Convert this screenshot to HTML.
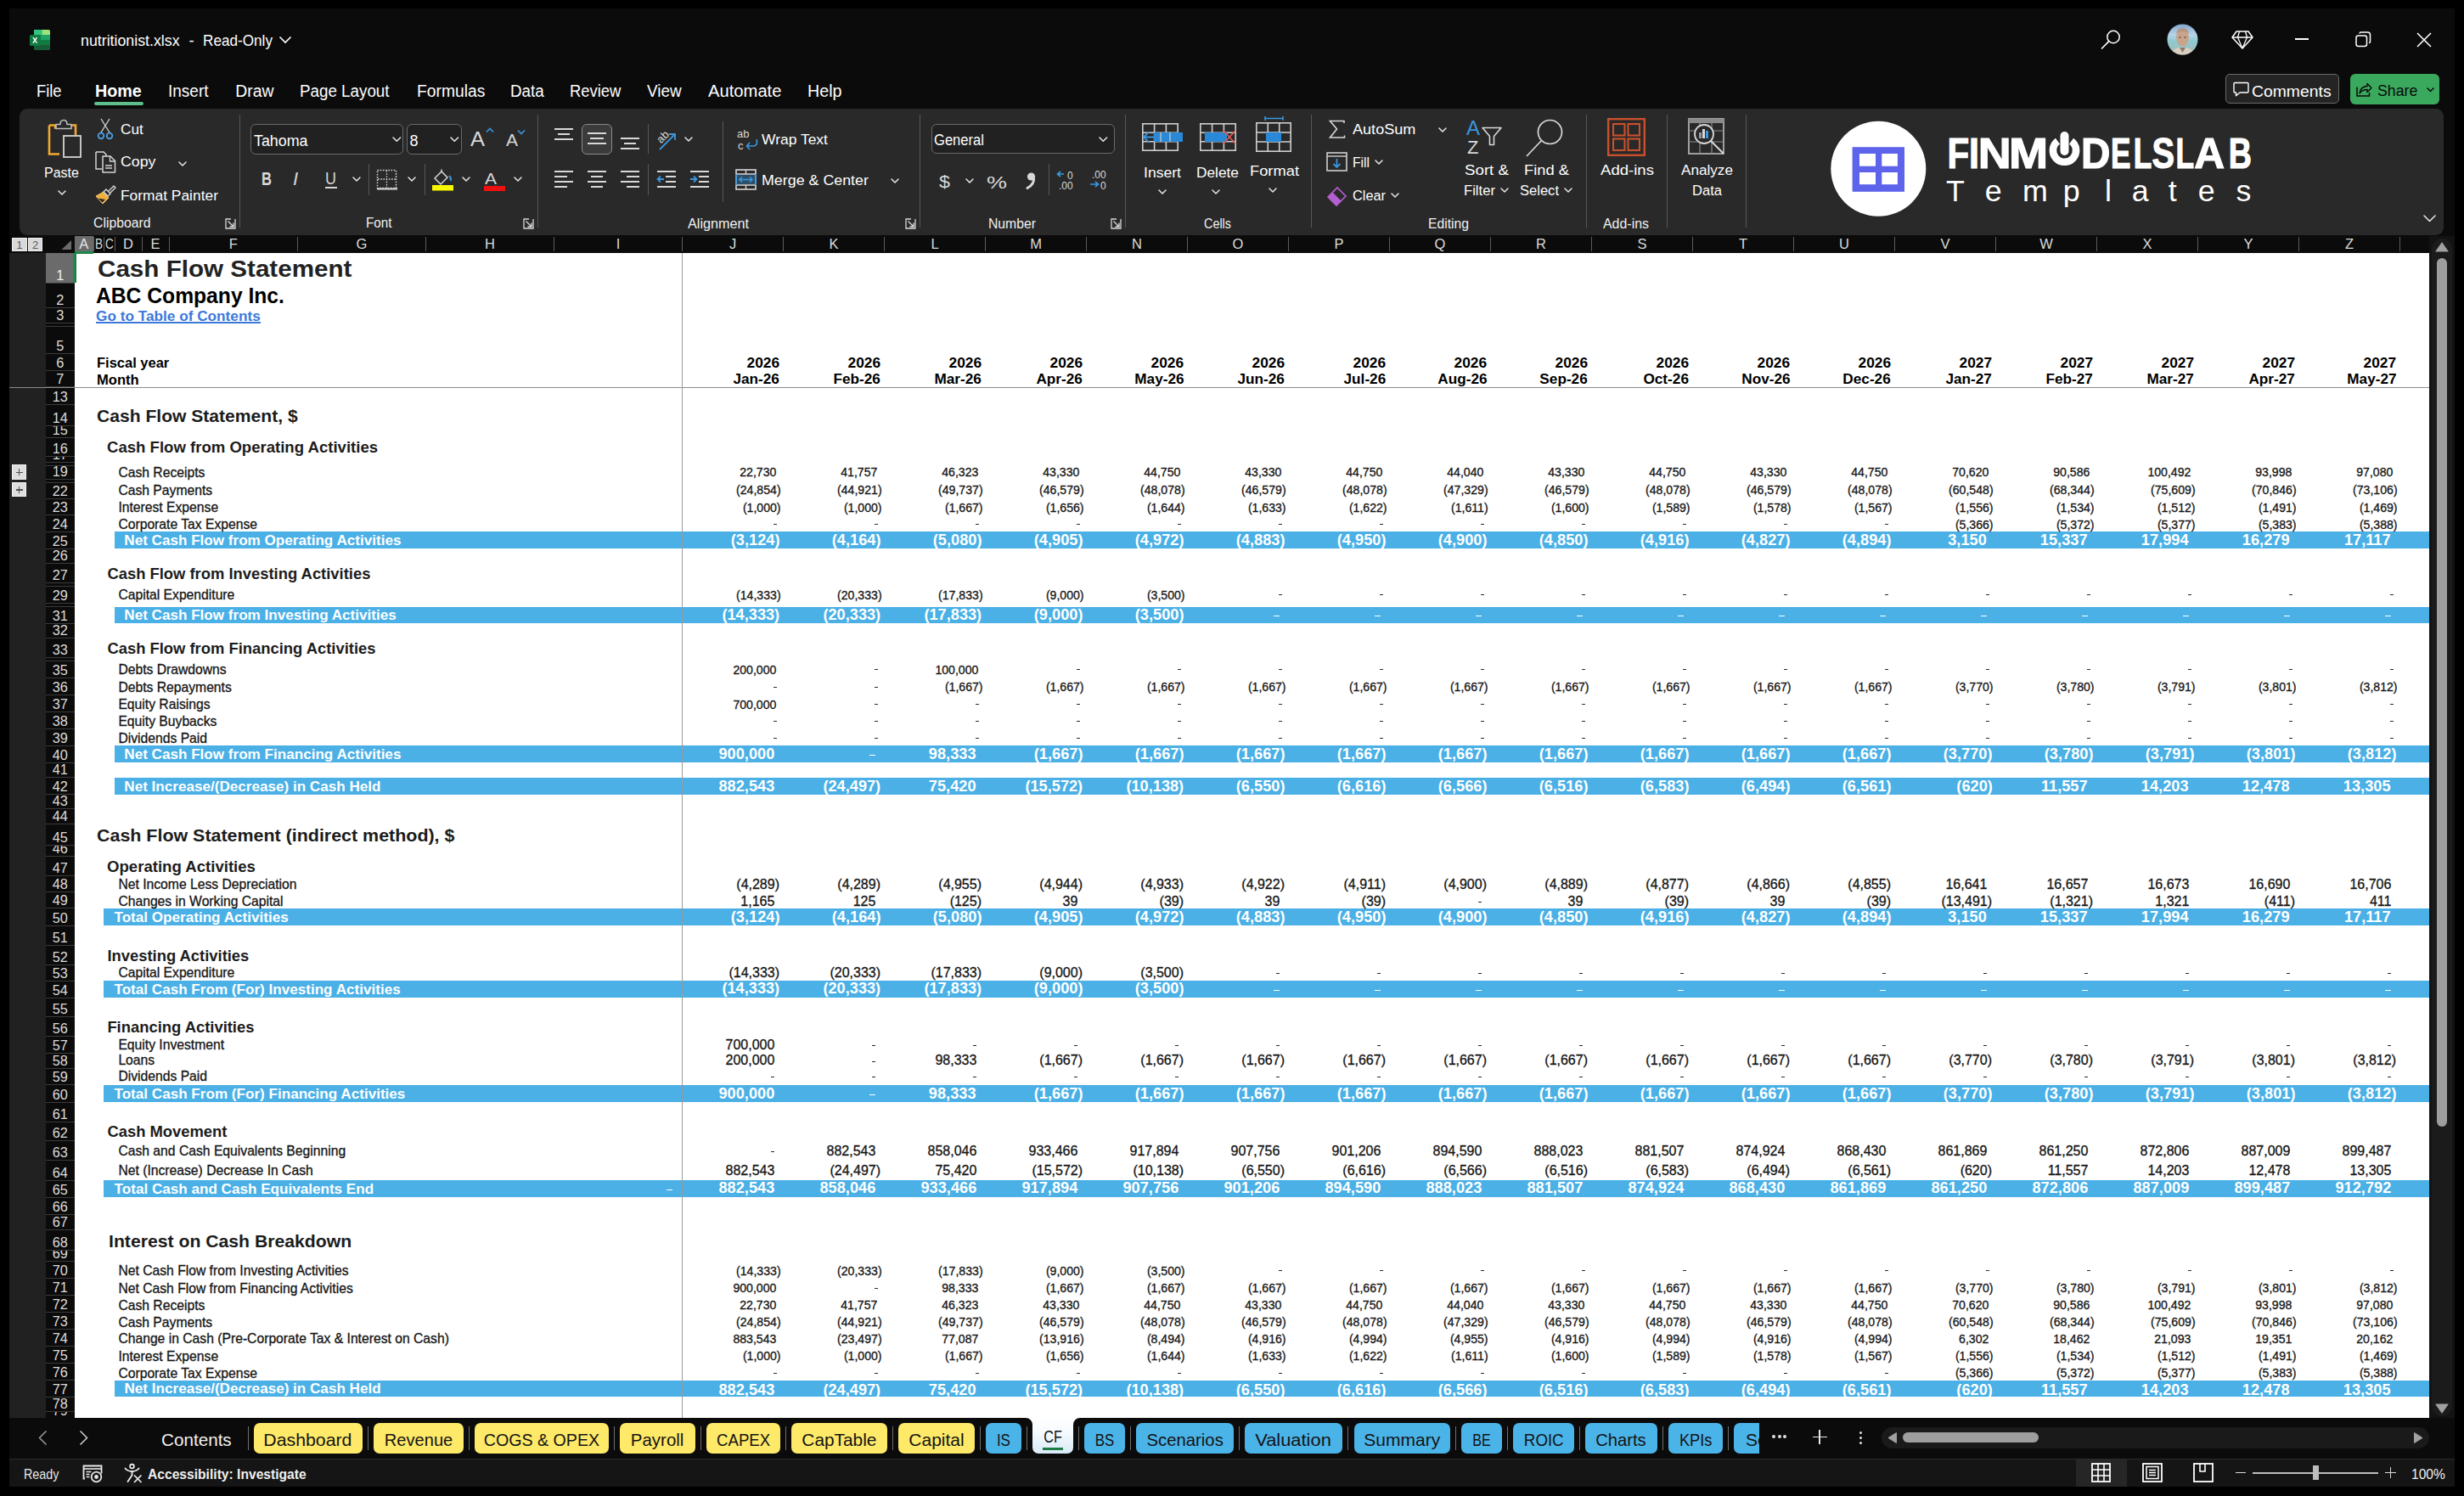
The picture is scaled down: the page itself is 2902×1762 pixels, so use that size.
<!DOCTYPE html>
<html><head><meta charset="utf-8"><title>nutritionist.xlsx</title>
<style>
html,body{margin:0;padding:0;}
body{width:2902px;height:1762px;background:#000;position:relative;overflow:hidden;font-family:"Liberation Sans",sans-serif;}
.a{position:absolute;}
.t,.s{position:absolute;white-space:nowrap;line-height:1;}
.s{-webkit-text-stroke:0.3px #141414;}
svg.a{overflow:visible;}
</style></head><body>
<div class="a" style="left:11.00px;top:10.00px;width:2880.00px;height:1741.00px;background:#0b0b0b;"></div>
<svg class="a" style="left:34.00px;top:34.00px" width="26" height="26" viewBox="0 0 26 26">
<rect x="6" y="1" width="19" height="24" rx="2" fill="#107c41"/>
<rect x="6" y="1" width="9.5" height="6" fill="#33c481"/>
<path d="M15.5 1h7.5a2 2 0 0 1 2 2v4h-9.5z" fill="#9ee37a"/>
<rect x="6" y="7" width="19" height="6" fill="#21a366"/>
<rect x="6" y="13" width="19" height="6" fill="#107c41"/>
<path d="M6 19h19v4a2 2 0 0 1-2 2H8a2 2 0 0 1-2-2z" fill="#185c37"/>
<rect x="1" y="7" width="13" height="13" rx="1.5" fill="#107c41"/>
<path d="M4.2 10l2.1 3.3L4.1 16.8h1.7l1.4-2.3 1.4 2.3h1.7l-2.2-3.4 2.1-3.4H8.5L7.2 12.2 5.9 10z" fill="#fff"/>
</svg>
<div class="t" style="top:38.59px;font-size:18.60px;color:#ffffff;left:95.30px;transform:scaleX(0.9560);transform-origin:0 0;">nutritionist.xlsx</div>
<div class="t" style="top:38.59px;font-size:18.60px;color:#ffffff;left:222.40px;">-</div>
<div class="t" style="top:38.59px;font-size:18.60px;color:#ffffff;left:239.40px;transform:scaleX(0.9223);transform-origin:0 0;">Read-Only</div>
<svg class="a" style="left:328.00px;top:42.00px" width="16" height="10" viewBox="0 0 16 10"><path d="M1.5 1.5l6.5 6.5 6.5-6.5" stroke="#fff" stroke-width="1.6" fill="none"/></svg>
<svg class="a" style="left:2472.00px;top:34.00px" width="28" height="26" viewBox="0 0 28 26"><circle cx="17" cy="9.5" r="7.2" stroke="#fff" stroke-width="1.5" fill="none"/><path d="M11.8 14.7L3.5 23" stroke="#fff" stroke-width="1.7" stroke-linecap="round"/></svg>
<svg class="a" style="left:2552.00px;top:28.00px" width="37" height="37" viewBox="0 0 37 37">
<defs><clipPath id="avc"><circle cx="18.5" cy="18.5" r="18"/></clipPath>
<linearGradient id="avbg" x1="0" y1="0" x2="0" y2="1"><stop offset="0" stop-color="#7fa6cf"/><stop offset="0.35" stop-color="#b9d3e6"/><stop offset="0.55" stop-color="#8ec9cf"/><stop offset="1" stop-color="#a9b8b8"/></linearGradient></defs>
<g clip-path="url(#avc)">
<rect width="37" height="37" fill="url(#avbg)"/>
<ellipse cx="18.5" cy="16.5" rx="7.5" ry="10" fill="#c8a48c"/>
<path d="M11 12q1-7 7.5-7t7.5 7q-2-3-7.5-3t-7.5 3z" fill="#b89580"/>
<path d="M4 37q2-9 14.5-9.5q12.5 0.5 14.5 9.5z" fill="#d9cfc0"/>
<path d="M15 28l3.5 6 3.5-6" fill="#8a7a6a"/>
<ellipse cx="15.5" cy="16" rx="1.2" ry="0.8" fill="#4a3a30"/><ellipse cx="21.5" cy="16" rx="1.2" ry="0.8" fill="#4a3a30"/>
</g></svg>
<svg class="a" style="left:2628.00px;top:35.00px" width="26" height="24" viewBox="0 0 26 24"><path d="M6 2h14l5 7-12 13L1 9z" stroke="#fff" stroke-width="1.5" fill="none" stroke-linejoin="round"/><path d="M1 9h24M9.5 2L7.5 9l5.5 13M16.5 2l2 7-5.5 13" stroke="#fff" stroke-width="1.3" fill="none"/></svg>
<div class="a" style="left:2703.00px;top:45.20px;width:16.00px;height:2.00px;background:#ffffff;"></div>
<svg class="a" style="left:2774.00px;top:37.00px" width="19" height="19" viewBox="0 0 19 19"><rect x="1" y="5" width="12.5" height="12.5" rx="2.5" stroke="#fff" stroke-width="1.5" fill="none"/><path d="M5 2.5q0-1.5 1.5-1.5h8q3 0 3 3v8q0 1.5-1.5 1.5" stroke="#fff" stroke-width="1.5" fill="none"/></svg>
<svg class="a" style="left:2846.00px;top:38.00px" width="18" height="18" viewBox="0 0 18 18"><path d="M1 1L17 17M17 1L1 17" stroke="#fff" stroke-width="1.6"/></svg>
<div class="a" style="left:2621.00px;top:87.00px;width:134.00px;height:35.00px;background:#242424;border:1px solid #6a6a6a;border-radius:5px;box-sizing:border-box;"></div>
<svg class="a" style="left:2630.00px;top:96.00px" width="19" height="18" viewBox="0 0 19 18"><path d="M2 1.5h15a1 1 0 0 1 1 1v9.5a1 1 0 0 1-1 1H8l-4.5 3.7V13H2a1 1 0 0 1-1-1V2.5a1 1 0 0 1 1-1z" stroke="#fff" stroke-width="1.4" fill="none" stroke-linejoin="round"/></svg>
<div class="t" style="top:98.59px;font-size:18.60px;color:#ffffff;left:2652.30px;transform:scaleX(1.0409);transform-origin:0 0;">Comments</div>
<div class="a" style="left:2768.00px;top:87.00px;width:105.00px;height:35.50px;background:#3aa95e;border-radius:6px;"></div>
<svg class="a" style="left:2773.00px;top:95.00px" width="21" height="20" viewBox="0 0 21 20"><path d="M3 7.5v10.5h14.5v-4" stroke="#0a0a0a" stroke-width="1.5" fill="none"/><path d="M6 15q1-8 9-8.5V3.5l5 5-5 5v-3q-6 0-9 4.5z" stroke="#0a0a0a" stroke-width="1.4" fill="none" stroke-linejoin="round"/></svg>
<div class="t" style="top:97.79px;font-size:18.60px;color:#0a0a0a;left:2799.60px;transform:scaleX(0.9550);transform-origin:0 0;">Share</div>
<svg class="a" style="left:2857.00px;top:102.00px" width="11" height="8" viewBox="0 0 11 8"><path d="M1.5 1.5l4 4 4-4" stroke="#0a0a0a" stroke-width="1.5" fill="none"/></svg>
<div class="t" style="top:97.51px;font-size:19.40px;color:#ffffff;left:42.60px;transform:scaleX(0.9469);transform-origin:0 0;">File</div>
<div class="t" style="top:97.51px;font-size:19.40px;color:#ffffff;font-weight:bold;left:111.60px;transform:scaleX(1.0167);transform-origin:0 0;">Home</div>
<div class="t" style="top:97.51px;font-size:19.40px;color:#ffffff;left:198.00px;transform:scaleX(0.9790);transform-origin:0 0;">Insert</div>
<div class="t" style="top:97.51px;font-size:19.40px;color:#ffffff;left:277.20px;">Draw</div>
<div class="t" style="top:97.51px;font-size:19.40px;color:#ffffff;left:353.00px;transform:scaleX(0.9693);transform-origin:0 0;">Page Layout</div>
<div class="t" style="top:97.51px;font-size:19.40px;color:#ffffff;left:491.00px;transform:scaleX(0.9944);transform-origin:0 0;">Formulas</div>
<div class="t" style="top:97.51px;font-size:19.40px;color:#ffffff;left:600.60px;transform:scaleX(0.9712);transform-origin:0 0;">Data</div>
<div class="t" style="top:97.51px;font-size:19.40px;color:#ffffff;left:670.90px;transform:scaleX(0.9495);transform-origin:0 0;">Review</div>
<div class="t" style="top:97.51px;font-size:19.40px;color:#ffffff;left:762.20px;transform:scaleX(0.9736);transform-origin:0 0;">View</div>
<div class="t" style="top:97.51px;font-size:19.40px;color:#ffffff;left:834.00px;transform:scaleX(1.0417);transform-origin:0 0;">Automate</div>
<div class="t" style="top:97.51px;font-size:19.40px;color:#ffffff;left:951.00px;transform:scaleX(1.0151);transform-origin:0 0;">Help</div>
<div class="a" style="left:111.00px;top:120.00px;width:58.00px;height:3.50px;background:#5fbf8a;border-radius:2px;"></div>
<div class="a" style="left:23.00px;top:128.00px;width:2855.00px;height:148.50px;background:#292929;border-radius:9px;"></div>
<svg class="a" style="left:53.00px;top:139.00px" width="45" height="48" viewBox="0 0 45 48">
<path d="M5 8.5h7v3h17v-3h7v12" stroke="#f0a830" stroke-width="2.6" fill="none"/>
<path d="M5 8.5v34h12" stroke="#f0a830" stroke-width="2.6" fill="none"/>
<path d="M13 12.5v-5h5q0-5 4-5t4 5h5v5z" stroke="#bdbdbd" stroke-width="1.6" fill="#292929" stroke-linejoin="round"/>
<rect x="22" y="21" width="20" height="25" stroke="#d4d4d4" stroke-width="1.8" fill="#292929"/>
</svg>
<div class="t" style="top:196.44px;font-size:16.90px;color:#ffffff;left:51.70px;transform:scaleX(0.9441);transform-origin:0 0;">Paste</div>
<svg class="a" style="left:67.50px;top:224.00px" width="10" height="6" viewBox="0 0 10 6"><path d="M1 1l4 4 4 -4" stroke="#e8e8e8" stroke-width="1.5" fill="none" stroke-linecap="round" stroke-linejoin="round"/></svg>
<svg class="a" style="left:114.00px;top:139.00px" width="22" height="27" viewBox="0 0 22 27">
<path d="M5 1l10 16M15 1L5 17" stroke="#d8d8d8" stroke-width="1.3"/>
<circle cx="5" cy="21" r="3.3" stroke="#4aa0e6" stroke-width="1.8" fill="none"/>
<circle cx="15" cy="21" r="3.3" stroke="#4aa0e6" stroke-width="1.8" fill="none"/></svg>
<div class="t" style="top:145.44px;font-size:16.90px;color:#ffffff;left:142.40px;transform:scaleX(1.0190);transform-origin:0 0;">Cut</div>
<svg class="a" style="left:111.00px;top:178.00px" width="27" height="27" viewBox="0 0 27 27">
<path d="M2 1h9l3 3v3" stroke="#d4d4d4" stroke-width="1.5" fill="none"/><path d="M2 1v20h7" stroke="#d4d4d4" stroke-width="1.5" fill="none"/>
<path d="M10 6h9l5.5 5.5V25H10z" stroke="#d4d4d4" stroke-width="1.5" fill="#292929" stroke-linejoin="round"/>
<path d="M18.5 6v6h6" stroke="#d4d4d4" stroke-width="1.3" fill="none"/>
<path d="M13 17h8M13 20h8" stroke="#d4d4d4" stroke-width="1.3"/></svg>
<div class="t" style="top:183.44px;font-size:16.90px;color:#ffffff;left:142.40px;transform:scaleX(1.0494);transform-origin:0 0;">Copy</div>
<svg class="a" style="left:210.00px;top:189.50px" width="10" height="6" viewBox="0 0 10 6"><path d="M1 1l4 4 4 -4" stroke="#e8e8e8" stroke-width="1.5" fill="none" stroke-linecap="round" stroke-linejoin="round"/></svg>
<svg class="a" style="left:111.00px;top:217.00px" width="27" height="26" viewBox="0 0 27 26">
<path d="M2 14l8 9 7-7-6-7z" fill="#f0b03a"/><path d="M2 14l8 9 7-7-6-7z" stroke="#f5c870" stroke-width="1" fill="none"/>
<path d="M4.5 16.5l5 5 3.5-3.5" fill="#292929" stroke="none"/>
<path d="M11 9l5 5 3-3-5-5z" stroke="#d8d8d8" stroke-width="1.4" fill="#292929"/>
<path d="M17 8l6-6 2 2-6 6" stroke="#d8d8d8" stroke-width="1.4" fill="none" stroke-linejoin="round"/></svg>
<div class="t" style="top:223.44px;font-size:16.90px;color:#ffffff;left:142.40px;transform:scaleX(1.0289);transform-origin:0 0;">Format Painter</div>
<div class="t" style="top:254.84px;font-size:15.60px;color:#f2f2f2;left:109.50px;transform:scaleX(1.0109);transform-origin:0 0;">Clipboard</div>
<svg class="a" style="left:265.00px;top:257.00px" width="13" height="13" viewBox="0 0 13 13"><path d="M1 1h11v11H1z" stroke="#d8d8d8" stroke-width="1.3" fill="none" stroke-dasharray="6 5 100"/><path d="M3.5 3.5l6.5 6.5M10 5.5v4.5H5.5" stroke="#d8d8d8" stroke-width="1.4" fill="none"/></svg>
<div class="a" style="left:282.00px;top:135.00px;width:1.00px;height:133.00px;background:#575757;"></div>
<div class="a" style="left:295.30px;top:146.20px;width:180.20px;height:35.50px;background:#212121;border:1px solid #6a6a6a;border-radius:6px;box-sizing:border-box;"></div>
<div class="t" style="top:156.50px;font-size:18.00px;color:#ffffff;left:298.50px;transform:scaleX(0.9916);transform-origin:0 0;">Tahoma</div>
<svg class="a" style="left:461.70px;top:160.85px" width="10.6" height="6.3" viewBox="0 0 10.6 6.3"><path d="M1 1l4.3 4.3 4.3 -4.3" stroke="#e8e8e8" stroke-width="1.5" fill="none" stroke-linecap="round" stroke-linejoin="round"/></svg>
<div class="a" style="left:479.40px;top:146.20px;width:64.30px;height:35.50px;background:#212121;border:1px solid #6a6a6a;border-radius:6px;box-sizing:border-box;"></div>
<div class="t" style="top:156.50px;font-size:18.00px;color:#ffffff;left:482.50px;">8</div>
<svg class="a" style="left:529.70px;top:160.85px" width="10.6" height="6.3" viewBox="0 0 10.6 6.3"><path d="M1 1l4.3 4.3 4.3 -4.3" stroke="#e8e8e8" stroke-width="1.5" fill="none" stroke-linecap="round" stroke-linejoin="round"/></svg>
<div class="t" style="top:152.40px;font-size:24.00px;color:#d8d8d8;left:554.00px;transform:scaleX(1.0620);transform-origin:0 0;">A</div>
<svg class="a" style="left:572.00px;top:150.00px" width="10" height="7" viewBox="0 0 10 7"><path d="M1 5.5l4-4 4 4" stroke="#3a96dd" stroke-width="1.7" fill="none"/></svg>
<div class="t" style="top:156.23px;font-size:19.50px;color:#d8d8d8;left:596.00px;transform:scaleX(1.0764);transform-origin:0 0;">A</div>
<svg class="a" style="left:609.00px;top:152.00px" width="10" height="7" viewBox="0 0 10 7"><path d="M1 1.5l4 4 4-4" stroke="#3a96dd" stroke-width="1.7" fill="none"/></svg>
<div class="t" style="top:200.10px;font-size:22.00px;color:#d8d8d8;font-weight:bold;left:307.50px;transform:scaleX(0.7553);transform-origin:0 0;">B</div>
<div class="t" style="top:200.10px;font-size:22.00px;color:#d8d8d8;left:345.00px;font-style:italic;font-family:"Liberation Serif",serif;">I</div>
<div class="t" style="top:201.23px;font-size:19.50px;color:#d8d8d8;left:383.00px;transform:scaleX(0.9231);transform-origin:0 0;">U</div>
<div class="a" style="left:383.00px;top:220.00px;width:14.00px;height:1.80px;background:#d8d8d8;"></div>
<svg class="a" style="left:414.50px;top:207.50px" width="10" height="6" viewBox="0 0 10 6"><path d="M1 1l4 4 4 -4" stroke="#e8e8e8" stroke-width="1.5" fill="none" stroke-linecap="round" stroke-linejoin="round"/></svg>
<div class="a" style="left:434.00px;top:193.00px;width:1.00px;height:37.00px;background:#575757;"></div>
<svg class="a" style="left:443.00px;top:199.00px" width="26" height="26" viewBox="0 0 26 26"><rect x="1.5" y="1.5" width="22" height="21" stroke="#d8d8d8" stroke-width="1.5" fill="none" stroke-dasharray="1.6 1.6"/><path d="M12.5 2v20M2 12h21" stroke="#d8d8d8" stroke-width="1.3" stroke-dasharray="1.6 1.6"/><path d="M1 23.5h24" stroke="#d8d8d8" stroke-width="2"/></svg>
<svg class="a" style="left:479.50px;top:207.50px" width="10" height="6" viewBox="0 0 10 6"><path d="M1 1l4 4 4 -4" stroke="#e8e8e8" stroke-width="1.5" fill="none" stroke-linecap="round" stroke-linejoin="round"/></svg>
<div class="a" style="left:499.50px;top:193.00px;width:1.00px;height:37.00px;background:#575757;"></div>
<svg class="a" style="left:508.00px;top:199.00px" width="27" height="27" viewBox="0 0 27 27"><path d="M4 11l8-8 7 7-8 8z" stroke="#d8d8d8" stroke-width="1.5" fill="none" stroke-linejoin="round"/><path d="M12 3V0.5" stroke="#d8d8d8" stroke-width="1.5"/><path d="M21 8q3 3 1.5 6" stroke="#3a96dd" stroke-width="2" fill="none"/><rect x="1" y="19" width="25" height="6.5" fill="#f7f700"/></svg>
<svg class="a" style="left:544.00px;top:207.50px" width="10" height="6" viewBox="0 0 10 6"><path d="M1 1l4 4 4 -4" stroke="#e8e8e8" stroke-width="1.5" fill="none" stroke-linecap="round" stroke-linejoin="round"/></svg>
<div class="t" style="top:200.65px;font-size:19.00px;color:#d8d8d8;left:570.50px;transform:scaleX(1.1047);transform-origin:0 0;">A</div>
<div class="a" style="left:570.00px;top:218.50px;width:24.50px;height:6.00px;background:#ee1111;"></div>
<svg class="a" style="left:604.50px;top:207.50px" width="10" height="6" viewBox="0 0 10 6"><path d="M1 1l4 4 4 -4" stroke="#e8e8e8" stroke-width="1.5" fill="none" stroke-linecap="round" stroke-linejoin="round"/></svg>
<div class="t" style="top:255.04px;font-size:15.60px;color:#f2f2f2;left:430.50px;transform:scaleX(0.9771);transform-origin:0 0;">Font</div>
<svg class="a" style="left:616.00px;top:257.00px" width="13" height="13" viewBox="0 0 13 13"><path d="M1 1h11v11H1z" stroke="#d8d8d8" stroke-width="1.3" fill="none" stroke-dasharray="6 5 100"/><path d="M3.5 3.5l6.5 6.5M10 5.5v4.5H5.5" stroke="#d8d8d8" stroke-width="1.4" fill="none"/></svg>
<div class="a" style="left:633.30px;top:135.00px;width:1.00px;height:133.00px;background:#575757;"></div>
<div class="a" style="left:653.00px;top:151.00px;width:22.00px;height:1.80px;background:#d8d8d8;"></div>
<div class="a" style="left:657.00px;top:157.00px;width:14.00px;height:1.80px;background:#d8d8d8;"></div>
<div class="a" style="left:653.00px;top:163.00px;width:22.00px;height:1.80px;background:#d8d8d8;"></div>
<div class="a" style="left:685.30px;top:146.00px;width:35.30px;height:35.80px;background:#3b3b3b;border:1px solid #8a8a8a;border-radius:6px;box-sizing:border-box;"></div>
<div class="a" style="left:692.00px;top:156.00px;width:22.00px;height:1.80px;background:#d8d8d8;"></div>
<div class="a" style="left:695.00px;top:162.00px;width:16.00px;height:1.80px;background:#d8d8d8;"></div>
<div class="a" style="left:692.00px;top:168.00px;width:22.00px;height:1.80px;background:#d8d8d8;"></div>
<div class="a" style="left:731.00px;top:162.00px;width:22.00px;height:1.80px;background:#d8d8d8;"></div>
<div class="a" style="left:735.00px;top:168.00px;width:14.00px;height:1.80px;background:#d8d8d8;"></div>
<div class="a" style="left:731.00px;top:174.00px;width:22.00px;height:1.80px;background:#d8d8d8;"></div>
<div class="a" style="left:763.00px;top:146.00px;width:1.00px;height:35.00px;background:#575757;"></div>
<svg class="a" style="left:771.00px;top:149.00px" width="30" height="29" viewBox="0 0 30 29"><text x="2" y="17" font-family="Liberation Sans" font-size="13" fill="#d8d8d8" transform="rotate(-45 9 12)">ab</text><path d="M6 27L24 9M17 9h7v7" stroke="#3a96dd" stroke-width="1.8" fill="none"/></svg>
<svg class="a" style="left:805.50px;top:161.00px" width="10" height="6" viewBox="0 0 10 6"><path d="M1 1l4 4 4 -4" stroke="#e8e8e8" stroke-width="1.5" fill="none" stroke-linecap="round" stroke-linejoin="round"/></svg>
<div class="a" style="left:850.50px;top:143.00px;width:1.00px;height:95.00px;background:#575757;"></div>
<svg class="a" style="left:868.00px;top:151.00px" width="27" height="28" viewBox="0 0 27 28"><text x="0" y="11" font-family="Liberation Sans" font-size="13" fill="#d8d8d8">ab</text><text x="1" y="25" font-family="Liberation Sans" font-size="13" fill="#d8d8d8">c</text><path d="M23 13q2 7-3 8h-8M15 17l-3.5 4 3.5 4" stroke="#3a96dd" stroke-width="1.7" fill="none"/></svg>
<div class="t" style="top:157.24px;font-size:16.90px;color:#ffffff;left:897.00px;transform:scaleX(1.0337);transform-origin:0 0;">Wrap Text</div>
<div class="a" style="left:653.00px;top:201.00px;width:22.00px;height:1.80px;background:#d8d8d8;"></div>
<div class="a" style="left:653.00px;top:207.00px;width:15.00px;height:1.80px;background:#d8d8d8;"></div>
<div class="a" style="left:653.00px;top:213.00px;width:22.00px;height:1.80px;background:#d8d8d8;"></div>
<div class="a" style="left:653.00px;top:219.00px;width:15.00px;height:1.80px;background:#d8d8d8;"></div>
<div class="a" style="left:692.00px;top:201.00px;width:22.00px;height:1.80px;background:#d8d8d8;"></div>
<div class="a" style="left:696.00px;top:207.00px;width:14.00px;height:1.80px;background:#d8d8d8;"></div>
<div class="a" style="left:692.00px;top:213.00px;width:22.00px;height:1.80px;background:#d8d8d8;"></div>
<div class="a" style="left:696.00px;top:219.00px;width:14.00px;height:1.80px;background:#d8d8d8;"></div>
<div class="a" style="left:731.00px;top:201.00px;width:22.00px;height:1.80px;background:#d8d8d8;"></div>
<div class="a" style="left:738.00px;top:207.00px;width:15.00px;height:1.80px;background:#d8d8d8;"></div>
<div class="a" style="left:731.00px;top:213.00px;width:22.00px;height:1.80px;background:#d8d8d8;"></div>
<div class="a" style="left:738.00px;top:219.00px;width:15.00px;height:1.80px;background:#d8d8d8;"></div>
<div class="a" style="left:763.00px;top:193.00px;width:1.00px;height:37.00px;background:#575757;"></div>
<div class="a" style="left:774.00px;top:201.00px;width:22.00px;height:1.80px;background:#d8d8d8;"></div>
<div class="a" style="left:784.00px;top:207.00px;width:12.00px;height:1.80px;background:#d8d8d8;"></div>
<div class="a" style="left:784.00px;top:213.00px;width:12.00px;height:1.80px;background:#d8d8d8;"></div>
<div class="a" style="left:774.00px;top:219.00px;width:22.00px;height:1.80px;background:#d8d8d8;"></div>
<svg class="a" style="left:773.00px;top:205.00px" width="10" height="12" viewBox="0 0 10 12"><path d="M9 6H2M5 2.5L1.5 6 5 9.5" stroke="#3a96dd" stroke-width="1.8" fill="none"/></svg>
<div class="a" style="left:813.00px;top:201.00px;width:22.00px;height:1.80px;background:#d8d8d8;"></div>
<div class="a" style="left:823.00px;top:207.00px;width:12.00px;height:1.80px;background:#d8d8d8;"></div>
<div class="a" style="left:823.00px;top:213.00px;width:12.00px;height:1.80px;background:#d8d8d8;"></div>
<div class="a" style="left:813.00px;top:219.00px;width:22.00px;height:1.80px;background:#d8d8d8;"></div>
<svg class="a" style="left:812.00px;top:205.00px" width="10" height="12" viewBox="0 0 10 12"><path d="M1 6h7M5 2.5L8.5 6 5 9.5" stroke="#3a96dd" stroke-width="1.8" fill="none"/></svg>
<svg class="a" style="left:866.00px;top:199.00px" width="26" height="26" viewBox="0 0 26 26"><rect x="1" y="1" width="23" height="23" stroke="#d8d8d8" stroke-width="1.6" fill="none"/><path d="M12.5 1v5M12.5 19v5M1 6h23M1 19h23" stroke="#d8d8d8" stroke-width="1.4"/><rect x="2" y="7" width="21" height="11" fill="#3a96dd" opacity="0.35"/><path d="M5 12.5h15M8 9.5l-3 3 3 3M17 9.5l3 3-3 3M1 6v13M24 6v13" stroke="#3a96dd" stroke-width="1.7" fill="none"/></svg>
<div class="t" style="top:204.94px;font-size:16.90px;color:#ffffff;left:897.00px;transform:scaleX(1.0562);transform-origin:0 0;">Merge &amp; Center</div>
<svg class="a" style="left:1048.50px;top:210.00px" width="10" height="6" viewBox="0 0 10 6"><path d="M1 1l4 4 4 -4" stroke="#e8e8e8" stroke-width="1.5" fill="none" stroke-linecap="round" stroke-linejoin="round"/></svg>
<div class="t" style="top:255.54px;font-size:15.60px;color:#f2f2f2;left:810.00px;transform:scaleX(1.0379);transform-origin:0 0;">Alignment</div>
<svg class="a" style="left:1066.00px;top:257.00px" width="13" height="13" viewBox="0 0 13 13"><path d="M1 1h11v11H1z" stroke="#d8d8d8" stroke-width="1.3" fill="none" stroke-dasharray="6 5 100"/><path d="M3.5 3.5l6.5 6.5M10 5.5v4.5H5.5" stroke="#d8d8d8" stroke-width="1.4" fill="none"/></svg>
<div class="a" style="left:1083.00px;top:135.00px;width:1.00px;height:133.00px;background:#575757;"></div>
<div class="a" style="left:1096.60px;top:146.40px;width:216.80px;height:35.10px;background:#212121;border:1px solid #6a6a6a;border-radius:6px;box-sizing:border-box;"></div>
<div class="t" style="top:156.30px;font-size:18.00px;color:#ffffff;left:1099.50px;transform:scaleX(0.9213);transform-origin:0 0;">General</div>
<svg class="a" style="left:1294.20px;top:160.85px" width="10.6" height="6.3" viewBox="0 0 10.6 6.3"><path d="M1 1l4.3 4.3 4.3 -4.3" stroke="#e8e8e8" stroke-width="1.5" fill="none" stroke-linecap="round" stroke-linejoin="round"/></svg>
<div class="t" style="top:202.95px;font-size:21.00px;color:#d8d8d8;left:1106.00px;transform:scaleX(1.1131);transform-origin:0 0;">$</div>
<svg class="a" style="left:1137.00px;top:209.50px" width="10" height="6" viewBox="0 0 10 6"><path d="M1 1l4 4 4 -4" stroke="#e8e8e8" stroke-width="1.5" fill="none" stroke-linecap="round" stroke-linejoin="round"/></svg>
<div class="t" style="top:204.45px;font-size:21.00px;color:#d8d8d8;left:1162.00px;transform:scaleX(1.2853);transform-origin:0 0;">%</div>
<svg class="a" style="left:1207.00px;top:202.00px" width="14" height="21" viewBox="0 0 14 21"><circle cx="7.5" cy="6" r="4.6" fill="#d8d8d8"/><path d="M10.5 7q1 8-7.5 12.5" stroke="#d8d8d8" stroke-width="3" fill="none" stroke-linecap="round"/></svg>
<div class="a" style="left:1235.00px;top:193.00px;width:1.00px;height:37.00px;background:#575757;"></div>
<svg class="a" style="left:1243.00px;top:199.00px" width="27" height="25" viewBox="0 0 27 25"><path d="M10 6H3M6 3L2.5 6 6 9" stroke="#3a96dd" stroke-width="1.7" fill="none"/><text x="14" y="12" font-family="Liberation Sans" font-size="12" fill="#d8d8d8">0</text><text x="4" y="23.5" font-family="Liberation Sans" font-size="12" fill="#d8d8d8">.00</text></svg>
<svg class="a" style="left:1282.00px;top:199.00px" width="27" height="25" viewBox="0 0 27 25"><text x="4" y="11" font-family="Liberation Sans" font-size="12" fill="#d8d8d8">.00</text><path d="M2 18h9M8 15l3.5 3L8 21" stroke="#3a96dd" stroke-width="1.7" fill="none"/><text x="14" y="23.5" font-family="Liberation Sans" font-size="12" fill="#d8d8d8">0</text></svg>
<div class="t" style="top:255.54px;font-size:15.60px;color:#f2f2f2;left:1163.80px;transform:scaleX(1.0093);transform-origin:0 0;">Number</div>
<svg class="a" style="left:1308.00px;top:257.00px" width="13" height="13" viewBox="0 0 13 13"><path d="M1 1h11v11H1z" stroke="#d8d8d8" stroke-width="1.3" fill="none" stroke-dasharray="6 5 100"/><path d="M3.5 3.5l6.5 6.5M10 5.5v4.5H5.5" stroke="#d8d8d8" stroke-width="1.4" fill="none"/></svg>
<div class="a" style="left:1325.00px;top:135.00px;width:1.00px;height:133.00px;background:#575757;"></div>
<svg class="a" style="left:1345.00px;top:144.50px" width="49" height="35" viewBox="0 0 49 35"><rect x="0.8" y="0.8" width="41.4" height="31.4" stroke="#d0d0d0" stroke-width="1.6" fill="none"/><path d="M14.6 0V33" stroke="#d0d0d0" stroke-width="1.6"/><path d="M28.4 0V33" stroke="#d0d0d0" stroke-width="1.6"/><path d="M0 11.2667H43" stroke="#d0d0d0" stroke-width="1.6"/><path d="M0 21.7333H43" stroke="#d0d0d0" stroke-width="1.6"/><rect x="14" y="11" width="34" height="11" fill="#2a88d8"/><path d="M15 16.5H2M8 10.5L2 16.5 8 22.5" stroke="#3a96dd" stroke-width="1.8" fill="none"/><path d="M22 11v11M33 11v11" stroke="#d0d0d0" stroke-width="1.2"/></svg>
<div class="t" style="top:196.44px;font-size:16.90px;color:#ffffff;left:1347.00px;transform:scaleX(1.0410);transform-origin:0 0;">Insert</div>
<svg class="a" style="left:1363.50px;top:223.00px" width="10" height="6" viewBox="0 0 10 6"><path d="M1 1l4 4 4 -4" stroke="#e8e8e8" stroke-width="1.5" fill="none" stroke-linecap="round" stroke-linejoin="round"/></svg>
<svg class="a" style="left:1413.00px;top:144.50px" width="46" height="35" viewBox="0 0 46 35"><rect x="0.8" y="0.8" width="41.4" height="31.4" stroke="#d0d0d0" stroke-width="1.6" fill="none"/><path d="M14.6 0V33" stroke="#d0d0d0" stroke-width="1.6"/><path d="M28.4 0V33" stroke="#d0d0d0" stroke-width="1.6"/><path d="M0 11.2667H43" stroke="#d0d0d0" stroke-width="1.6"/><path d="M0 21.7333H43" stroke="#d0d0d0" stroke-width="1.6"/><rect x="6" y="11" width="26" height="11" fill="#2a88d8"/><path d="M28 9l14 15M42 9L28 24" stroke="#e05a5a" stroke-width="1.8"/></svg>
<div class="t" style="top:196.44px;font-size:16.90px;color:#ffffff;left:1409.00px;transform:scaleX(1.0235);transform-origin:0 0;">Delete</div>
<svg class="a" style="left:1427.00px;top:223.00px" width="10" height="6" viewBox="0 0 10 6"><path d="M1 1l4 4 4 -4" stroke="#e8e8e8" stroke-width="1.5" fill="none" stroke-linecap="round" stroke-linejoin="round"/></svg>
<svg class="a" style="left:1479.00px;top:137.00px" width="43" height="42" viewBox="0 0 43 42"><path d="M11 2.5h21M11 0v5M32 0v5" stroke="#3a96dd" stroke-width="1.6"/><g transform="translate(0,7)"><rect x="0.8" y="0.8" width="40.4" height="33.4" stroke="#d0d0d0" stroke-width="1.6" fill="none"/><path d="M14.2667 0V35" stroke="#d0d0d0" stroke-width="1.6"/><path d="M27.7333 0V35" stroke="#d0d0d0" stroke-width="1.6"/><path d="M0 11.9333H42" stroke="#d0d0d0" stroke-width="1.6"/><path d="M0 23.0667H42" stroke="#d0d0d0" stroke-width="1.6"/><rect x="12" y="12" width="18" height="11" fill="#2a88d8"/></g></svg>
<div class="t" style="top:194.24px;font-size:16.90px;color:#ffffff;left:1472.00px;transform:scaleX(1.0837);transform-origin:0 0;">Format</div>
<svg class="a" style="left:1494.00px;top:221.00px" width="10" height="6" viewBox="0 0 10 6"><path d="M1 1l4 4 4 -4" stroke="#e8e8e8" stroke-width="1.5" fill="none" stroke-linecap="round" stroke-linejoin="round"/></svg>
<div class="t" style="top:256.04px;font-size:15.60px;color:#f2f2f2;left:1418.00px;transform:scaleX(0.9229);transform-origin:0 0;">Cells</div>
<div class="a" style="left:1544.10px;top:135.00px;width:1.00px;height:133.00px;background:#575757;"></div>
<svg class="a" style="left:1564.00px;top:141.00px" width="22" height="23" viewBox="0 0 22 23"><path d="M19 4V1.5H2.5l8 9.5-8 10H19.5V18.5" stroke="#d8d8d8" stroke-width="1.6" fill="none" stroke-linejoin="miter"/></svg>
<div class="t" style="top:145.44px;font-size:16.90px;color:#ffffff;left:1592.60px;transform:scaleX(1.0703);transform-origin:0 0;">AutoSum</div>
<svg class="a" style="left:1694.00px;top:149.50px" width="10" height="6" viewBox="0 0 10 6"><path d="M1 1l4 4 4 -4" stroke="#e8e8e8" stroke-width="1.5" fill="none" stroke-linecap="round" stroke-linejoin="round"/></svg>
<svg class="a" style="left:1562.00px;top:179.00px" width="26" height="24" viewBox="0 0 26 24"><rect x="1" y="1" width="23" height="21" stroke="#d0d0d0" stroke-width="1.6" fill="none"/><path d="M1 5h23" stroke="#d0d0d0" stroke-width="1.4"/><path d="M12.5 8v10M8.5 14l4 4 4-4" stroke="#3a96dd" stroke-width="1.8" fill="none"/></svg>
<div class="t" style="top:184.44px;font-size:16.90px;color:#ffffff;left:1593.00px;transform:scaleX(0.9265);transform-origin:0 0;">Fill</div>
<svg class="a" style="left:1619.00px;top:187.50px" width="10" height="6" viewBox="0 0 10 6"><path d="M1 1l4 4 4 -4" stroke="#e8e8e8" stroke-width="1.5" fill="none" stroke-linecap="round" stroke-linejoin="round"/></svg>
<svg class="a" style="left:1562.00px;top:217.00px" width="26" height="26" viewBox="0 0 26 26"><path d="M2 15l11-11 10 10-11 11z" stroke="#b45fcf" stroke-width="1.6" fill="none"/><path d="M2 15l5.5-5.5 10 10L12 25z" fill="#b45fcf"/></svg>
<div class="t" style="top:223.44px;font-size:16.90px;color:#ffffff;left:1593.00px;transform:scaleX(0.9657);transform-origin:0 0;">Clear</div>
<svg class="a" style="left:1637.50px;top:226.50px" width="10" height="6" viewBox="0 0 10 6"><path d="M1 1l4 4 4 -4" stroke="#e8e8e8" stroke-width="1.5" fill="none" stroke-linecap="round" stroke-linejoin="round"/></svg>
<svg class="a" style="left:1727.00px;top:140.00px" width="48" height="44" viewBox="0 0 48 44"><text x="0" y="19" font-family="Liberation Sans" font-size="24" fill="#3a96dd">A</text><text x="1" y="41" font-family="Liberation Sans" font-size="22" fill="#d8d8d8">Z</text><path d="M19 10.5h22l-8.5 10v10h-5v-10z" stroke="#d8d8d8" stroke-width="1.6" fill="none" stroke-linejoin="round"/></svg>
<div class="t" style="top:193.44px;font-size:16.90px;color:#ffffff;left:1725.00px;transform:scaleX(1.1073);transform-origin:0 0;">Sort &amp;</div>
<div class="t" style="top:217.44px;font-size:16.90px;color:#ffffff;left:1724.00px;transform:scaleX(0.9852);transform-origin:0 0;">Filter</div>
<svg class="a" style="left:1767.00px;top:221.00px" width="10" height="6" viewBox="0 0 10 6"><path d="M1 1l4 4 4 -4" stroke="#e8e8e8" stroke-width="1.5" fill="none" stroke-linecap="round" stroke-linejoin="round"/></svg>
<svg class="a" style="left:1796.00px;top:140.00px" width="48" height="46" viewBox="0 0 48 46"><circle cx="29.5" cy="15.5" r="14" stroke="#d8d8d8" stroke-width="1.7" fill="none"/><path d="M19.5 25.5L2 44" stroke="#d8d8d8" stroke-width="1.7"/></svg>
<div class="t" style="top:193.44px;font-size:16.90px;color:#ffffff;left:1795.00px;transform:scaleX(1.0851);transform-origin:0 0;">Find &amp;</div>
<div class="t" style="top:217.44px;font-size:16.90px;color:#ffffff;left:1790.00px;transform:scaleX(0.9793);transform-origin:0 0;">Select</div>
<svg class="a" style="left:1841.50px;top:221.00px" width="10" height="6" viewBox="0 0 10 6"><path d="M1 1l4 4 4 -4" stroke="#e8e8e8" stroke-width="1.5" fill="none" stroke-linecap="round" stroke-linejoin="round"/></svg>
<div class="t" style="top:255.54px;font-size:15.60px;color:#f2f2f2;left:1682.00px;transform:scaleX(1.0063);transform-origin:0 0;">Editing</div>
<div class="a" style="left:1867.80px;top:135.00px;width:1.00px;height:133.00px;background:#575757;"></div>
<svg class="a" style="left:1893.00px;top:139.00px" width="45" height="45" viewBox="0 0 45 45"><rect x="1.2" y="1.2" width="42.6" height="42.6" stroke="#c9502c" stroke-width="2.4" fill="none"/><rect x="7" y="7" width="13.5" height="13.5" stroke="#c9502c" stroke-width="2.1" fill="none"/><rect x="24.5" y="7" width="13.5" height="13.5" stroke="#c9502c" stroke-width="2.1" fill="none"/><rect x="7" y="24.5" width="13.5" height="13.5" stroke="#c9502c" stroke-width="2.1" fill="none"/><rect x="24.5" y="24.5" width="13.5" height="13.5" stroke="#c9502c" stroke-width="2.1" fill="none"/></svg>
<div class="t" style="top:193.44px;font-size:16.90px;color:#ffffff;left:1885.00px;transform:scaleX(1.0994);transform-origin:0 0;">Add-ins</div>
<div class="t" style="top:255.54px;font-size:15.60px;color:#f2f2f2;left:1888.00px;transform:scaleX(1.0209);transform-origin:0 0;">Add-ins</div>
<div class="a" style="left:1962.90px;top:135.00px;width:1.00px;height:133.00px;background:#575757;"></div>
<svg class="a" style="left:1988.00px;top:139.00px" width="45" height="46" viewBox="0 0 45 46"><rect x="1" y="1" width="41" height="41" stroke="#bdbdbd" stroke-width="1.6" fill="none"/><rect x="1" y="1" width="41" height="5" fill="#8a8a8a"/><path d="M1 15h41M1 28h41M14 6v36M28 6v36" stroke="#8a8a8a" stroke-width="1.2"/><circle cx="19" cy="19" r="11" stroke="#d8d8d8" stroke-width="1.8" fill="#292929"/><path d="M27 27l15 15" stroke="#d8d8d8" stroke-width="2"/><rect x="13" y="17" width="3" height="7" fill="#9a9a9a"/><rect x="17" y="13" width="3" height="11" fill="#d8d8d8"/><rect x="21" y="15" width="3" height="9" fill="#3a96dd"/></svg>
<div class="t" style="top:193.44px;font-size:16.90px;color:#ffffff;left:1980.00px;transform:scaleX(1.0146);transform-origin:0 0;">Analyze</div>
<div class="t" style="top:217.44px;font-size:16.90px;color:#ffffff;left:1993.00px;transform:scaleX(0.9804);transform-origin:0 0;">Data</div>
<div class="a" style="left:2055.50px;top:135.00px;width:1.00px;height:133.00px;background:#575757;"></div>
<svg class="a" style="left:2155.00px;top:142.00px" width="114" height="114" viewBox="0 0 114 114"><circle cx="57.3" cy="56.8" r="56" fill="#ffffff"/><rect x="26.6" y="31.2" width="61.4" height="52.6" fill="#5d63ea"/><rect x="35" y="39" width="19" height="14.7" fill="#fff"/><rect x="61.3" y="39" width="18.6" height="14.7" fill="#fff"/><rect x="35" y="61" width="19" height="14.2" fill="#fff"/><rect x="61.3" y="61" width="18.6" height="14.2" fill="#fff"/></svg>
<div class="t" style="top:155.57px;font-size:50.50px;color:#ffffff;font-weight:bold;left:2290.91px;transform:scaleX(0.8338);transform-origin:50% 0;-webkit-text-stroke:1.2px #fff;">F</div>
<div class="t" style="top:155.57px;font-size:50.50px;color:#ffffff;font-weight:bold;left:2318.17px;transform:scaleX(0.8531);transform-origin:50% 0;-webkit-text-stroke:1.2px #fff;">I</div>
<div class="t" style="top:155.57px;font-size:50.50px;color:#ffffff;font-weight:bold;left:2331.13px;transform:scaleX(1.0678);transform-origin:50% 0;-webkit-text-stroke:1.2px #fff;">N</div>
<div class="t" style="top:155.57px;font-size:50.50px;color:#ffffff;font-weight:bold;left:2368.26px;transform:scaleX(1.0980);transform-origin:50% 0;-webkit-text-stroke:1.2px #fff;">M</div>
<div class="t" style="top:155.57px;font-size:50.50px;color:#ffffff;font-weight:bold;left:2449.60px;transform:scaleX(0.9452);transform-origin:50% 0;-webkit-text-stroke:1.2px #fff;">D</div>
<div class="t" style="top:155.57px;font-size:50.50px;color:#ffffff;font-weight:bold;left:2481.11px;transform:scaleX(0.6973);transform-origin:50% 0;-webkit-text-stroke:1.2px #fff;">E</div>
<div class="t" style="top:155.57px;font-size:50.50px;color:#ffffff;font-weight:bold;left:2507.75px;transform:scaleX(0.6977);transform-origin:50% 0;-webkit-text-stroke:1.2px #fff;">L</div>
<div class="t" style="top:155.57px;font-size:50.50px;color:#ffffff;font-weight:bold;left:2531.27px;transform:scaleX(0.7877);transform-origin:50% 0;-webkit-text-stroke:1.2px #fff;">S</div>
<div class="t" style="top:155.57px;font-size:50.50px;color:#ffffff;font-weight:bold;left:2557.59px;transform:scaleX(0.7015);transform-origin:50% 0;-webkit-text-stroke:1.2px #fff;">L</div>
<div class="t" style="top:155.57px;font-size:50.50px;color:#ffffff;font-weight:bold;left:2584.32px;transform:scaleX(0.9810);transform-origin:50% 0;-webkit-text-stroke:1.2px #fff;">A</div>
<div class="t" style="top:155.57px;font-size:50.50px;color:#ffffff;font-weight:bold;left:2619.94px;transform:scaleX(0.7463);transform-origin:50% 0;-webkit-text-stroke:1.2px #fff;">B</div>
<svg class="a" style="left:2410.00px;top:152.00px" width="44" height="48" viewBox="0 0 44 48"><path d="M13.5 14.2A13.6 13.6 0 1 0 29.5 14.2" stroke="#fff" stroke-width="8.6" fill="none"/><path d="M21.5 8v18" stroke="#fff" stroke-width="10" stroke-linecap="round"/></svg>
<div class="t" style="top:207.77px;font-size:35.80px;color:#ffffff;left:2292.07px;">T</div>
<div class="t" style="top:207.77px;font-size:35.80px;color:#ffffff;left:2337.64px;">e</div>
<div class="t" style="top:207.77px;font-size:35.80px;color:#ffffff;left:2382.09px;">m</div>
<div class="t" style="top:207.77px;font-size:35.80px;color:#ffffff;left:2429.74px;">p</div>
<div class="t" style="top:207.77px;font-size:35.80px;color:#ffffff;left:2479.02px;">l</div>
<div class="t" style="top:207.77px;font-size:35.80px;color:#ffffff;left:2510.84px;">a</div>
<div class="t" style="top:207.77px;font-size:35.80px;color:#ffffff;left:2553.63px;">t</div>
<div class="t" style="top:207.77px;font-size:35.80px;color:#ffffff;left:2588.64px;">e</div>
<div class="t" style="top:207.77px;font-size:35.80px;color:#ffffff;left:2633.45px;">s</div>
<svg class="a" style="left:2853.50px;top:252.75px" width="15" height="8.5" viewBox="0 0 15 8.5"><path d="M1 1l6.5 6.5 6.5 -6.5" stroke="#e0e0e0" stroke-width="1.6" fill="none" stroke-linecap="round" stroke-linejoin="round"/></svg>
<div class="a" style="left:11.00px;top:278.00px;width:43.00px;height:1392.00px;background:#212121;"></div>
<div class="a" style="left:11.00px;top:278.00px;width:2849.50px;height:19.50px;background:#0b0b0b;"></div>
<div class="a" style="left:14.00px;top:279.50px;width:17.50px;height:16.50px;background:#d9d9d9;border:1px solid #efefef;box-sizing:border-box;"></div>
<div class="t" style="top:282.25px;font-size:13.00px;color:#5a5a5a;left:19.13px;">1</div>
<div class="a" style="left:33.00px;top:279.50px;width:17.00px;height:16.50px;background:#d9d9d9;border:1px solid #efefef;box-sizing:border-box;"></div>
<div class="t" style="top:282.25px;font-size:13.00px;color:#5a5a5a;left:37.88px;">2</div>
<svg class="a" style="left:71.00px;top:282.00px" width="14" height="13" viewBox="0 0 14 13"><path d="M13 1V12H1.5z" fill="#6a6a6a"/></svg>
<div class="a" style="left:87.50px;top:278.00px;width:22.50px;height:19.50px;background:#6b6b6b;"></div>
<div class="a" style="left:109.50px;top:279.00px;width:1.00px;height:17.00px;background:#5c5c5c;"></div>
<div class="t" style="top:279.38px;font-size:16.50px;color:#e6e6e6;left:93.25px;">A</div>
<div class="a" style="left:121.50px;top:279.00px;width:1.00px;height:17.00px;background:#5c5c5c;"></div>
<div class="t" style="top:279.38px;font-size:16.50px;color:#dcdcdc;left:110.50px;transform:scaleX(0.8200);transform-origin:50% 0;">B</div>
<div class="a" style="left:134.50px;top:279.00px;width:1.00px;height:17.00px;background:#5c5c5c;"></div>
<div class="t" style="top:279.38px;font-size:16.50px;color:#dcdcdc;left:122.54px;transform:scaleX(0.8200);transform-origin:50% 0;">C</div>
<div class="a" style="left:166.50px;top:279.00px;width:1.00px;height:17.00px;background:#5c5c5c;"></div>
<div class="t" style="top:279.38px;font-size:16.50px;color:#dcdcdc;left:145.04px;">D</div>
<div class="a" style="left:198.50px;top:279.00px;width:1.00px;height:17.00px;background:#5c5c5c;"></div>
<div class="t" style="top:279.38px;font-size:16.50px;color:#dcdcdc;left:177.50px;">E</div>
<div class="a" style="left:350.00px;top:279.00px;width:1.00px;height:17.00px;background:#5c5c5c;"></div>
<div class="t" style="top:279.38px;font-size:16.50px;color:#dcdcdc;left:269.71px;">F</div>
<div class="a" style="left:501.00px;top:279.00px;width:1.00px;height:17.00px;background:#5c5c5c;"></div>
<div class="t" style="top:279.38px;font-size:16.50px;color:#dcdcdc;left:419.58px;">G</div>
<div class="a" style="left:652.00px;top:279.00px;width:1.00px;height:17.00px;background:#5c5c5c;"></div>
<div class="t" style="top:279.38px;font-size:16.50px;color:#dcdcdc;left:571.04px;">H</div>
<div class="a" style="left:803.00px;top:279.00px;width:1.00px;height:17.00px;background:#5c5c5c;"></div>
<div class="t" style="top:279.38px;font-size:16.50px;color:#dcdcdc;left:725.71px;">I</div>
<div class="a" style="left:922.00px;top:279.00px;width:1.00px;height:17.00px;background:#5c5c5c;"></div>
<div class="t" style="top:279.38px;font-size:16.50px;color:#dcdcdc;left:858.88px;">J</div>
<div class="a" style="left:1041.00px;top:279.00px;width:1.00px;height:17.00px;background:#5c5c5c;"></div>
<div class="t" style="top:279.38px;font-size:16.50px;color:#dcdcdc;left:976.50px;">K</div>
<div class="a" style="left:1160.00px;top:279.00px;width:1.00px;height:17.00px;background:#5c5c5c;"></div>
<div class="t" style="top:279.38px;font-size:16.50px;color:#dcdcdc;left:1096.41px;">L</div>
<div class="a" style="left:1279.00px;top:279.00px;width:1.00px;height:17.00px;background:#5c5c5c;"></div>
<div class="t" style="top:279.38px;font-size:16.50px;color:#dcdcdc;left:1213.13px;">M</div>
<div class="a" style="left:1398.00px;top:279.00px;width:1.00px;height:17.00px;background:#5c5c5c;"></div>
<div class="t" style="top:279.38px;font-size:16.50px;color:#dcdcdc;left:1333.04px;">N</div>
<div class="a" style="left:1517.00px;top:279.00px;width:1.00px;height:17.00px;background:#5c5c5c;"></div>
<div class="t" style="top:279.38px;font-size:16.50px;color:#dcdcdc;left:1451.58px;">O</div>
<div class="a" style="left:1636.00px;top:279.00px;width:1.00px;height:17.00px;background:#5c5c5c;"></div>
<div class="t" style="top:279.38px;font-size:16.50px;color:#dcdcdc;left:1571.50px;">P</div>
<div class="a" style="left:1755.00px;top:279.00px;width:1.00px;height:17.00px;background:#5c5c5c;"></div>
<div class="t" style="top:279.38px;font-size:16.50px;color:#dcdcdc;left:1689.58px;">Q</div>
<div class="a" style="left:1874.00px;top:279.00px;width:1.00px;height:17.00px;background:#5c5c5c;"></div>
<div class="t" style="top:279.38px;font-size:16.50px;color:#dcdcdc;left:1809.04px;">R</div>
<div class="a" style="left:1993.00px;top:279.00px;width:1.00px;height:17.00px;background:#5c5c5c;"></div>
<div class="t" style="top:279.38px;font-size:16.50px;color:#dcdcdc;left:1928.50px;">S</div>
<div class="a" style="left:2112.00px;top:279.00px;width:1.00px;height:17.00px;background:#5c5c5c;"></div>
<div class="t" style="top:279.38px;font-size:16.50px;color:#dcdcdc;left:2047.96px;">T</div>
<div class="a" style="left:2231.00px;top:279.00px;width:1.00px;height:17.00px;background:#5c5c5c;"></div>
<div class="t" style="top:279.38px;font-size:16.50px;color:#dcdcdc;left:2166.04px;">U</div>
<div class="a" style="left:2350.00px;top:279.00px;width:1.00px;height:17.00px;background:#5c5c5c;"></div>
<div class="t" style="top:279.38px;font-size:16.50px;color:#dcdcdc;left:2285.50px;">V</div>
<div class="a" style="left:2469.00px;top:279.00px;width:1.00px;height:17.00px;background:#5c5c5c;"></div>
<div class="t" style="top:279.38px;font-size:16.50px;color:#dcdcdc;left:2402.21px;">W</div>
<div class="a" style="left:2588.00px;top:279.00px;width:1.00px;height:17.00px;background:#5c5c5c;"></div>
<div class="t" style="top:279.38px;font-size:16.50px;color:#dcdcdc;left:2523.50px;">X</div>
<div class="a" style="left:2707.00px;top:279.00px;width:1.00px;height:17.00px;background:#5c5c5c;"></div>
<div class="t" style="top:279.38px;font-size:16.50px;color:#dcdcdc;left:2642.50px;">Y</div>
<div class="a" style="left:2826.00px;top:279.00px;width:1.00px;height:17.00px;background:#5c5c5c;"></div>
<div class="t" style="top:279.38px;font-size:16.50px;color:#dcdcdc;left:2761.96px;">Z</div>
<div class="a" style="left:87.50px;top:295.50px;width:22.50px;height:2.00px;background:#1e8c4e;"></div>
<div class="a" style="left:54.00px;top:297.50px;width:33.50px;height:1372.50px;background:#0b0b0b;"></div>
<div class="a" style="left:87.50px;top:297.50px;width:2773.00px;height:1372.50px;background:#ffffff;"></div>
<div class="a" style="left:54.00px;top:297.50px;width:33.50px;height:35.50px;background:#6b6b6b;"></div>
<div class="a" style="left:86.00px;top:297.50px;width:1.50px;height:35.50px;background:#1e8c4e;"></div>
<div class="a" style="left:54.00px;top:332.50px;width:33.50px;height:1.00px;background:#3a3a3a;"></div>
<div class="a" style="left:54px;top:298.00px;width:33.5px;height:34.50px;overflow:hidden">
<div class="t" style="left:12.22px;top:17.54px;font-size:16.30px;color:#f0f0f0">1</div>
</div>
<div class="a" style="left:54.00px;top:361.50px;width:33.50px;height:1.00px;background:#3a3a3a;"></div>
<div class="a" style="left:54px;top:333.50px;width:33.5px;height:28.00px;overflow:hidden">
<div class="t" style="left:12.22px;top:11.04px;font-size:16.30px;color:#dcdcdc">2</div>
</div>
<div class="a" style="left:54.00px;top:380.00px;width:33.50px;height:1.00px;background:#3a3a3a;"></div>
<div class="a" style="left:54px;top:362.50px;width:33.5px;height:17.50px;overflow:hidden">
<div class="t" style="left:12.22px;top:0.54px;font-size:16.30px;color:#dcdcdc">3</div>
</div>
<div class="a" style="left:54.00px;top:383.50px;width:33.50px;height:1.00px;background:#3a3a3a;"></div>
<div class="a" style="left:54.00px;top:415.50px;width:33.50px;height:1.00px;background:#3a3a3a;"></div>
<div class="a" style="left:54px;top:384.50px;width:33.5px;height:31.00px;overflow:hidden">
<div class="t" style="left:12.22px;top:14.04px;font-size:16.30px;color:#dcdcdc">5</div>
</div>
<div class="a" style="left:54.00px;top:435.50px;width:33.50px;height:1.00px;background:#3a3a3a;"></div>
<div class="a" style="left:54px;top:416.50px;width:33.5px;height:19.00px;overflow:hidden">
<div class="t" style="left:12.22px;top:2.04px;font-size:16.30px;color:#dcdcdc">6</div>
</div>
<div class="a" style="left:54.00px;top:455.00px;width:33.50px;height:1.00px;background:#3a3a3a;"></div>
<div class="a" style="left:54px;top:436.50px;width:33.5px;height:18.50px;overflow:hidden">
<div class="t" style="left:12.22px;top:1.54px;font-size:16.30px;color:#dcdcdc">7</div>
</div>
<div class="a" style="left:54.00px;top:475.50px;width:33.50px;height:1.00px;background:#3a3a3a;"></div>
<div class="a" style="left:54px;top:457.50px;width:33.5px;height:18.00px;overflow:hidden">
<div class="t" style="left:7.68px;top:1.04px;font-size:16.30px;color:#dcdcdc">13</div>
</div>
<div class="a" style="left:54.00px;top:500.50px;width:33.50px;height:1.00px;background:#3a3a3a;"></div>
<div class="a" style="left:54px;top:476.50px;width:33.5px;height:24.00px;overflow:hidden">
<div class="t" style="left:7.68px;top:7.04px;font-size:16.30px;color:#dcdcdc">14</div>
</div>
<div class="a" style="left:54.00px;top:514.50px;width:33.50px;height:1.00px;background:#3a3a3a;"></div>
<div class="a" style="left:54px;top:501.50px;width:33.5px;height:13.00px;overflow:hidden">
<div class="t" style="left:7.68px;top:-3.96px;font-size:16.30px;color:#dcdcdc">15</div>
</div>
<div class="a" style="left:54.00px;top:537.00px;width:33.50px;height:1.00px;background:#3a3a3a;"></div>
<div class="a" style="left:54px;top:515.50px;width:33.5px;height:21.50px;overflow:hidden">
<div class="t" style="left:7.68px;top:4.54px;font-size:16.30px;color:#dcdcdc">16</div>
</div>
<div class="a" style="left:54.00px;top:544.00px;width:33.50px;height:1.00px;background:#3a3a3a;"></div>
<div class="a" style="left:54px;top:538.00px;width:33.5px;height:6.00px;overflow:hidden">
<div class="t" style="left:7.68px;top:-10.96px;font-size:16.30px;color:#dcdcdc">17</div>
</div>
<div class="a" style="left:54.00px;top:547.50px;width:33.50px;height:1.00px;background:#3a3a3a;"></div>
<div class="a" style="left:54.00px;top:564.00px;width:33.50px;height:1.00px;background:#3a3a3a;"></div>
<div class="a" style="left:54px;top:548.50px;width:33.5px;height:15.50px;overflow:hidden">
<div class="t" style="left:7.68px;top:-1.46px;font-size:16.30px;color:#dcdcdc">19</div>
</div>
<div class="a" style="left:54.00px;top:568.00px;width:33.50px;height:1.00px;background:#3a3a3a;"></div>
<div class="a" style="left:54.00px;top:586.50px;width:33.50px;height:1.00px;background:#3a3a3a;"></div>
<div class="a" style="left:54px;top:569.00px;width:33.5px;height:17.50px;overflow:hidden">
<div class="t" style="left:7.68px;top:0.54px;font-size:16.30px;color:#dcdcdc">22</div>
</div>
<div class="a" style="left:54.00px;top:605.50px;width:33.50px;height:1.00px;background:#3a3a3a;"></div>
<div class="a" style="left:54px;top:587.50px;width:33.5px;height:18.00px;overflow:hidden">
<div class="t" style="left:7.68px;top:1.04px;font-size:16.30px;color:#dcdcdc">23</div>
</div>
<div class="a" style="left:54.00px;top:625.50px;width:33.50px;height:1.00px;background:#3a3a3a;"></div>
<div class="a" style="left:54px;top:606.50px;width:33.5px;height:19.00px;overflow:hidden">
<div class="t" style="left:7.68px;top:2.04px;font-size:16.30px;color:#dcdcdc">24</div>
</div>
<div class="a" style="left:54.00px;top:645.50px;width:33.50px;height:1.00px;background:#3a3a3a;"></div>
<div class="a" style="left:54px;top:626.50px;width:33.5px;height:19.00px;overflow:hidden">
<div class="t" style="left:7.68px;top:2.04px;font-size:16.30px;color:#dcdcdc">25</div>
</div>
<div class="a" style="left:54.00px;top:663.00px;width:33.50px;height:1.00px;background:#3a3a3a;"></div>
<div class="a" style="left:54px;top:646.50px;width:33.5px;height:16.50px;overflow:hidden">
<div class="t" style="left:7.68px;top:-0.46px;font-size:16.30px;color:#dcdcdc">26</div>
</div>
<div class="a" style="left:54.00px;top:685.50px;width:33.50px;height:1.00px;background:#3a3a3a;"></div>
<div class="a" style="left:54px;top:664.00px;width:33.5px;height:21.50px;overflow:hidden">
<div class="t" style="left:7.68px;top:4.54px;font-size:16.30px;color:#dcdcdc">27</div>
</div>
<div class="a" style="left:54.00px;top:690.00px;width:33.50px;height:1.00px;background:#3a3a3a;"></div>
<div class="a" style="left:54.00px;top:710.00px;width:33.50px;height:1.00px;background:#3a3a3a;"></div>
<div class="a" style="left:54px;top:691.00px;width:33.5px;height:19.00px;overflow:hidden">
<div class="t" style="left:7.68px;top:2.04px;font-size:16.30px;color:#dcdcdc">29</div>
</div>
<div class="a" style="left:54.00px;top:714.00px;width:33.50px;height:1.00px;background:#3a3a3a;"></div>
<div class="a" style="left:54.00px;top:733.50px;width:33.50px;height:1.00px;background:#3a3a3a;"></div>
<div class="a" style="left:54px;top:715.00px;width:33.5px;height:18.50px;overflow:hidden">
<div class="t" style="left:7.68px;top:1.54px;font-size:16.30px;color:#dcdcdc">31</div>
</div>
<div class="a" style="left:54.00px;top:751.00px;width:33.50px;height:1.00px;background:#3a3a3a;"></div>
<div class="a" style="left:54px;top:734.50px;width:33.5px;height:16.50px;overflow:hidden">
<div class="t" style="left:7.68px;top:-0.46px;font-size:16.30px;color:#dcdcdc">32</div>
</div>
<div class="a" style="left:54.00px;top:773.50px;width:33.50px;height:1.00px;background:#3a3a3a;"></div>
<div class="a" style="left:54px;top:752.00px;width:33.5px;height:21.50px;overflow:hidden">
<div class="t" style="left:7.68px;top:4.54px;font-size:16.30px;color:#dcdcdc">33</div>
</div>
<div class="a" style="left:54.00px;top:778.00px;width:33.50px;height:1.00px;background:#3a3a3a;"></div>
<div class="a" style="left:54.00px;top:798.00px;width:33.50px;height:1.00px;background:#3a3a3a;"></div>
<div class="a" style="left:54px;top:779.00px;width:33.5px;height:19.00px;overflow:hidden">
<div class="t" style="left:7.68px;top:2.04px;font-size:16.30px;color:#dcdcdc">35</div>
</div>
<div class="a" style="left:54.00px;top:818.00px;width:33.50px;height:1.00px;background:#3a3a3a;"></div>
<div class="a" style="left:54px;top:799.00px;width:33.5px;height:19.00px;overflow:hidden">
<div class="t" style="left:7.68px;top:2.04px;font-size:16.30px;color:#dcdcdc">36</div>
</div>
<div class="a" style="left:54.00px;top:837.50px;width:33.50px;height:1.00px;background:#3a3a3a;"></div>
<div class="a" style="left:54px;top:819.00px;width:33.5px;height:18.50px;overflow:hidden">
<div class="t" style="left:7.68px;top:1.54px;font-size:16.30px;color:#dcdcdc">37</div>
</div>
<div class="a" style="left:54.00px;top:857.50px;width:33.50px;height:1.00px;background:#3a3a3a;"></div>
<div class="a" style="left:54px;top:838.50px;width:33.5px;height:19.00px;overflow:hidden">
<div class="t" style="left:7.68px;top:2.04px;font-size:16.30px;color:#dcdcdc">38</div>
</div>
<div class="a" style="left:54.00px;top:877.50px;width:33.50px;height:1.00px;background:#3a3a3a;"></div>
<div class="a" style="left:54px;top:858.50px;width:33.5px;height:19.00px;overflow:hidden">
<div class="t" style="left:7.68px;top:2.04px;font-size:16.30px;color:#dcdcdc">39</div>
</div>
<div class="a" style="left:54.00px;top:897.50px;width:33.50px;height:1.00px;background:#3a3a3a;"></div>
<div class="a" style="left:54px;top:878.50px;width:33.5px;height:19.00px;overflow:hidden">
<div class="t" style="left:7.68px;top:2.04px;font-size:16.30px;color:#dcdcdc">40</div>
</div>
<div class="a" style="left:54.00px;top:915.00px;width:33.50px;height:1.00px;background:#3a3a3a;"></div>
<div class="a" style="left:54px;top:898.50px;width:33.5px;height:16.50px;overflow:hidden">
<div class="t" style="left:7.68px;top:-0.46px;font-size:16.30px;color:#dcdcdc">41</div>
</div>
<div class="a" style="left:54.00px;top:935.00px;width:33.50px;height:1.00px;background:#3a3a3a;"></div>
<div class="a" style="left:54px;top:916.00px;width:33.5px;height:19.00px;overflow:hidden">
<div class="t" style="left:7.68px;top:2.04px;font-size:16.30px;color:#dcdcdc">42</div>
</div>
<div class="a" style="left:54.00px;top:952.00px;width:33.50px;height:1.00px;background:#3a3a3a;"></div>
<div class="a" style="left:54px;top:936.00px;width:33.5px;height:16.00px;overflow:hidden">
<div class="t" style="left:7.68px;top:-0.96px;font-size:16.30px;color:#dcdcdc">43</div>
</div>
<div class="a" style="left:54.00px;top:969.50px;width:33.50px;height:1.00px;background:#3a3a3a;"></div>
<div class="a" style="left:54px;top:953.00px;width:33.5px;height:16.50px;overflow:hidden">
<div class="t" style="left:7.68px;top:-0.46px;font-size:16.30px;color:#dcdcdc">44</div>
</div>
<div class="a" style="left:54.00px;top:994.50px;width:33.50px;height:1.00px;background:#3a3a3a;"></div>
<div class="a" style="left:54px;top:970.50px;width:33.5px;height:24.00px;overflow:hidden">
<div class="t" style="left:7.68px;top:7.04px;font-size:16.30px;color:#dcdcdc">45</div>
</div>
<div class="a" style="left:54.00px;top:1008.00px;width:33.50px;height:1.00px;background:#3a3a3a;"></div>
<div class="a" style="left:54px;top:995.50px;width:33.5px;height:12.50px;overflow:hidden">
<div class="t" style="left:7.68px;top:-4.46px;font-size:16.30px;color:#dcdcdc">46</div>
</div>
<div class="a" style="left:54.00px;top:1031.00px;width:33.50px;height:1.00px;background:#3a3a3a;"></div>
<div class="a" style="left:54px;top:1009.00px;width:33.5px;height:22.00px;overflow:hidden">
<div class="t" style="left:7.68px;top:5.05px;font-size:16.30px;color:#dcdcdc">47</div>
</div>
<div class="a" style="left:54.00px;top:1049.50px;width:33.50px;height:1.00px;background:#3a3a3a;"></div>
<div class="a" style="left:54px;top:1032.00px;width:33.5px;height:17.50px;overflow:hidden">
<div class="t" style="left:7.68px;top:0.55px;font-size:16.30px;color:#dcdcdc">48</div>
</div>
<div class="a" style="left:54.00px;top:1069.00px;width:33.50px;height:1.00px;background:#3a3a3a;"></div>
<div class="a" style="left:54px;top:1050.50px;width:33.5px;height:18.50px;overflow:hidden">
<div class="t" style="left:7.68px;top:1.55px;font-size:16.30px;color:#dcdcdc">49</div>
</div>
<div class="a" style="left:54.00px;top:1089.50px;width:33.50px;height:1.00px;background:#3a3a3a;"></div>
<div class="a" style="left:54px;top:1070.00px;width:33.5px;height:19.50px;overflow:hidden">
<div class="t" style="left:7.68px;top:2.55px;font-size:16.30px;color:#dcdcdc">50</div>
</div>
<div class="a" style="left:54.00px;top:1112.50px;width:33.50px;height:1.00px;background:#3a3a3a;"></div>
<div class="a" style="left:54px;top:1090.50px;width:33.5px;height:22.00px;overflow:hidden">
<div class="t" style="left:7.68px;top:5.05px;font-size:16.30px;color:#dcdcdc">51</div>
</div>
<div class="a" style="left:54.00px;top:1135.50px;width:33.50px;height:1.00px;background:#3a3a3a;"></div>
<div class="a" style="left:54px;top:1113.50px;width:33.5px;height:22.00px;overflow:hidden">
<div class="t" style="left:7.68px;top:5.05px;font-size:16.30px;color:#dcdcdc">52</div>
</div>
<div class="a" style="left:54.00px;top:1154.50px;width:33.50px;height:1.00px;background:#3a3a3a;"></div>
<div class="a" style="left:54px;top:1136.50px;width:33.5px;height:18.00px;overflow:hidden">
<div class="t" style="left:7.68px;top:1.05px;font-size:16.30px;color:#dcdcdc">53</div>
</div>
<div class="a" style="left:54.00px;top:1174.50px;width:33.50px;height:1.00px;background:#3a3a3a;"></div>
<div class="a" style="left:54px;top:1155.50px;width:33.5px;height:19.00px;overflow:hidden">
<div class="t" style="left:7.68px;top:2.05px;font-size:16.30px;color:#dcdcdc">54</div>
</div>
<div class="a" style="left:54.00px;top:1196.50px;width:33.50px;height:1.00px;background:#3a3a3a;"></div>
<div class="a" style="left:54px;top:1175.50px;width:33.5px;height:21.00px;overflow:hidden">
<div class="t" style="left:7.68px;top:4.05px;font-size:16.30px;color:#dcdcdc">55</div>
</div>
<div class="a" style="left:54.00px;top:1219.50px;width:33.50px;height:1.00px;background:#3a3a3a;"></div>
<div class="a" style="left:54px;top:1197.50px;width:33.5px;height:22.00px;overflow:hidden">
<div class="t" style="left:7.68px;top:5.05px;font-size:16.30px;color:#dcdcdc">56</div>
</div>
<div class="a" style="left:54.00px;top:1239.50px;width:33.50px;height:1.00px;background:#3a3a3a;"></div>
<div class="a" style="left:54px;top:1220.50px;width:33.5px;height:19.00px;overflow:hidden">
<div class="t" style="left:7.68px;top:2.05px;font-size:16.30px;color:#dcdcdc">57</div>
</div>
<div class="a" style="left:54.00px;top:1258.00px;width:33.50px;height:1.00px;background:#3a3a3a;"></div>
<div class="a" style="left:54px;top:1240.50px;width:33.5px;height:17.50px;overflow:hidden">
<div class="t" style="left:7.68px;top:0.55px;font-size:16.30px;color:#dcdcdc">58</div>
</div>
<div class="a" style="left:54.00px;top:1277.00px;width:33.50px;height:1.00px;background:#3a3a3a;"></div>
<div class="a" style="left:54px;top:1259.00px;width:33.5px;height:18.00px;overflow:hidden">
<div class="t" style="left:7.68px;top:1.05px;font-size:16.30px;color:#dcdcdc">59</div>
</div>
<div class="a" style="left:54.00px;top:1297.50px;width:33.50px;height:1.00px;background:#3a3a3a;"></div>
<div class="a" style="left:54px;top:1278.00px;width:33.5px;height:19.50px;overflow:hidden">
<div class="t" style="left:7.68px;top:2.55px;font-size:16.30px;color:#dcdcdc">60</div>
</div>
<div class="a" style="left:54.00px;top:1320.50px;width:33.50px;height:1.00px;background:#3a3a3a;"></div>
<div class="a" style="left:54px;top:1298.50px;width:33.5px;height:22.00px;overflow:hidden">
<div class="t" style="left:7.68px;top:5.05px;font-size:16.30px;color:#dcdcdc">61</div>
</div>
<div class="a" style="left:54.00px;top:1342.50px;width:33.50px;height:1.00px;background:#3a3a3a;"></div>
<div class="a" style="left:54px;top:1321.50px;width:33.5px;height:21.00px;overflow:hidden">
<div class="t" style="left:7.68px;top:4.05px;font-size:16.30px;color:#dcdcdc">62</div>
</div>
<div class="a" style="left:54.00px;top:1365.50px;width:33.50px;height:1.00px;background:#3a3a3a;"></div>
<div class="a" style="left:54px;top:1343.50px;width:33.5px;height:22.00px;overflow:hidden">
<div class="t" style="left:7.68px;top:5.05px;font-size:16.30px;color:#dcdcdc">63</div>
</div>
<div class="a" style="left:54.00px;top:1389.50px;width:33.50px;height:1.00px;background:#3a3a3a;"></div>
<div class="a" style="left:54px;top:1366.50px;width:33.5px;height:23.00px;overflow:hidden">
<div class="t" style="left:7.68px;top:6.05px;font-size:16.30px;color:#dcdcdc">64</div>
</div>
<div class="a" style="left:54.00px;top:1409.50px;width:33.50px;height:1.00px;background:#3a3a3a;"></div>
<div class="a" style="left:54px;top:1390.50px;width:33.5px;height:19.00px;overflow:hidden">
<div class="t" style="left:7.68px;top:2.05px;font-size:16.30px;color:#dcdcdc">65</div>
</div>
<div class="a" style="left:54.00px;top:1429.50px;width:33.50px;height:1.00px;background:#3a3a3a;"></div>
<div class="a" style="left:54px;top:1410.50px;width:33.5px;height:19.00px;overflow:hidden">
<div class="t" style="left:7.68px;top:2.05px;font-size:16.30px;color:#dcdcdc">66</div>
</div>
<div class="a" style="left:54.00px;top:1447.50px;width:33.50px;height:1.00px;background:#3a3a3a;"></div>
<div class="a" style="left:54px;top:1430.50px;width:33.5px;height:17.00px;overflow:hidden">
<div class="t" style="left:7.68px;top:0.05px;font-size:16.30px;color:#dcdcdc">67</div>
</div>
<div class="a" style="left:54.00px;top:1471.50px;width:33.50px;height:1.00px;background:#3a3a3a;"></div>
<div class="a" style="left:54px;top:1448.50px;width:33.5px;height:23.00px;overflow:hidden">
<div class="t" style="left:7.68px;top:6.05px;font-size:16.30px;color:#dcdcdc">68</div>
</div>
<div class="a" style="left:54.00px;top:1485.00px;width:33.50px;height:1.00px;background:#3a3a3a;"></div>
<div class="a" style="left:54px;top:1472.50px;width:33.5px;height:12.50px;overflow:hidden">
<div class="t" style="left:7.68px;top:-4.45px;font-size:16.30px;color:#dcdcdc">69</div>
</div>
<div class="a" style="left:54.00px;top:1504.50px;width:33.50px;height:1.00px;background:#3a3a3a;"></div>
<div class="a" style="left:54px;top:1486.00px;width:33.5px;height:18.50px;overflow:hidden">
<div class="t" style="left:7.68px;top:1.55px;font-size:16.30px;color:#dcdcdc">70</div>
</div>
<div class="a" style="left:54.00px;top:1525.00px;width:33.50px;height:1.00px;background:#3a3a3a;"></div>
<div class="a" style="left:54px;top:1505.50px;width:33.5px;height:19.50px;overflow:hidden">
<div class="t" style="left:7.68px;top:2.55px;font-size:16.30px;color:#dcdcdc">71</div>
</div>
<div class="a" style="left:54.00px;top:1544.50px;width:33.50px;height:1.00px;background:#3a3a3a;"></div>
<div class="a" style="left:54px;top:1526.00px;width:33.5px;height:18.50px;overflow:hidden">
<div class="t" style="left:7.68px;top:1.55px;font-size:16.30px;color:#dcdcdc">72</div>
</div>
<div class="a" style="left:54.00px;top:1564.50px;width:33.50px;height:1.00px;background:#3a3a3a;"></div>
<div class="a" style="left:54px;top:1545.50px;width:33.5px;height:19.00px;overflow:hidden">
<div class="t" style="left:7.68px;top:2.05px;font-size:16.30px;color:#dcdcdc">73</div>
</div>
<div class="a" style="left:54.00px;top:1584.50px;width:33.50px;height:1.00px;background:#3a3a3a;"></div>
<div class="a" style="left:54px;top:1565.50px;width:33.5px;height:19.00px;overflow:hidden">
<div class="t" style="left:7.68px;top:2.05px;font-size:16.30px;color:#dcdcdc">74</div>
</div>
<div class="a" style="left:54.00px;top:1605.00px;width:33.50px;height:1.00px;background:#3a3a3a;"></div>
<div class="a" style="left:54px;top:1585.50px;width:33.5px;height:19.50px;overflow:hidden">
<div class="t" style="left:7.68px;top:2.55px;font-size:16.30px;color:#dcdcdc">75</div>
</div>
<div class="a" style="left:54.00px;top:1625.00px;width:33.50px;height:1.00px;background:#3a3a3a;"></div>
<div class="a" style="left:54px;top:1606.00px;width:33.5px;height:19.00px;overflow:hidden">
<div class="t" style="left:7.68px;top:2.05px;font-size:16.30px;color:#dcdcdc">76</div>
</div>
<div class="a" style="left:54.00px;top:1644.50px;width:33.50px;height:1.00px;background:#3a3a3a;"></div>
<div class="a" style="left:54px;top:1626.00px;width:33.5px;height:18.50px;overflow:hidden">
<div class="t" style="left:7.68px;top:1.55px;font-size:16.30px;color:#dcdcdc">77</div>
</div>
<div class="a" style="left:54.00px;top:1661.50px;width:33.50px;height:1.00px;background:#3a3a3a;"></div>
<div class="a" style="left:54px;top:1645.50px;width:33.5px;height:16.00px;overflow:hidden">
<div class="t" style="left:7.68px;top:-0.95px;font-size:16.30px;color:#dcdcdc">78</div>
</div>
<div class="a" style="left:54.00px;top:1669.50px;width:33.50px;height:1.00px;background:#3a3a3a;"></div>
<div class="a" style="left:54px;top:1662.50px;width:33.5px;height:7.00px;overflow:hidden">
<div class="t" style="left:7.68px;top:-9.95px;font-size:16.30px;color:#dcdcdc">79</div>
</div>
<div class="a" style="left:11.00px;top:455.80px;width:2849.50px;height:1.20px;background:#8c8c8c;"></div>
<div class="a" style="left:135.00px;top:626.00px;width:2725.50px;height:20.00px;background:#4ab0e6;"></div>
<div class="a" style="left:135.00px;top:714.50px;width:2725.50px;height:19.50px;background:#4ab0e6;"></div>
<div class="a" style="left:135.00px;top:878.00px;width:2725.50px;height:20.00px;background:#4ab0e6;"></div>
<div class="a" style="left:135.00px;top:915.50px;width:2725.50px;height:20.00px;background:#4ab0e6;"></div>
<div class="a" style="left:135.00px;top:1625.50px;width:2725.50px;height:19.50px;background:#4ab0e6;"></div>
<div class="a" style="left:122.00px;top:1069.50px;width:2738.50px;height:20.50px;background:#4ab0e6;"></div>
<div class="a" style="left:122.00px;top:1155.00px;width:2738.50px;height:20.00px;background:#4ab0e6;"></div>
<div class="a" style="left:122.00px;top:1277.50px;width:2738.50px;height:20.50px;background:#4ab0e6;"></div>
<div class="a" style="left:122.00px;top:1390.00px;width:2738.50px;height:20.00px;background:#4ab0e6;"></div>
<div class="a" style="left:803.00px;top:297.50px;width:1.00px;height:1372.50px;background:#9a9a9a;"></div>
<div class="a" style="left:87.50px;top:297.50px;width:2.00px;height:35.50px;background:#1e7b45;"></div>
<div class="a" style="left:87.50px;top:297.50px;width:22.50px;height:1.50px;background:#1e7b45;"></div>
<div class="t" style="top:302.84px;font-size:27.60px;color:#222222;font-weight:bold;left:115.00px;transform:scaleX(1.0730);transform-origin:0 0;">Cash Flow Statement</div>
<div class="t" style="top:336.04px;font-size:25.60px;color:#000000;font-weight:bold;left:113.00px;transform:scaleX(0.9634);transform-origin:0 0;">ABC Company Inc.</div>
<div class="t" style="top:363.71px;font-size:17.40px;color:#3b78dc;font-weight:bold;left:113.00px;transform:scaleX(0.9893);transform-origin:0 0;">Go to Table of Contents</div>
<div class="a" style="left:113.00px;top:379.40px;width:193.80px;height:1.60px;background:#3b78dc;"></div>
<div class="t" style="top:418.81px;font-size:17.40px;color:#000000;font-weight:bold;left:113.60px;transform:scaleX(0.9481);transform-origin:0 0;">Fiscal year</div>
<div class="t" style="top:438.61px;font-size:17.40px;color:#000000;font-weight:bold;left:113.60px;transform:scaleX(0.9526);transform-origin:0 0;">Month</div>
<div class="t" style="top:480.03px;font-size:20.20px;color:#1c1c1c;font-weight:bold;left:114.20px;transform:scaleX(1.0444);transform-origin:0 0;">Cash Flow Statement, $</div>
<div class="t" style="top:518.26px;font-size:18.40px;color:#1c1c1c;font-weight:bold;left:126.40px;transform:scaleX(1.0093);transform-origin:0 0;">Cash Flow from Operating Activities</div>
<div class="s" style="top:548.55px;font-size:15.70px;color:#141414;left:139.40px;">Cash Receipts</div>
<div class="s" style="top:569.85px;font-size:15.70px;color:#141414;left:139.40px;">Cash Payments</div>
<div class="s" style="top:590.05px;font-size:15.70px;color:#141414;left:139.40px;">Interest Expense</div>
<div class="s" style="top:610.05px;font-size:15.70px;color:#141414;left:139.40px;">Corporate Tax Expense</div>
<div class="t" style="top:628.37px;font-size:17.10px;color:#ffffff;font-weight:bold;left:146.30px;">Net Cash Flow from Operating Activities</div>
<div class="t" style="top:666.76px;font-size:18.40px;color:#1c1c1c;font-weight:bold;left:126.40px;">Cash Flow from Investing Activities</div>
<div class="s" style="top:693.35px;font-size:15.70px;color:#141414;left:139.40px;">Capital Expenditure</div>
<div class="t" style="top:716.37px;font-size:17.10px;color:#ffffff;font-weight:bold;left:146.30px;">Net Cash Flow from Investing Activities</div>
<div class="t" style="top:754.76px;font-size:18.40px;color:#1c1c1c;font-weight:bold;left:126.40px;">Cash Flow from Financing Activities</div>
<div class="s" style="top:781.35px;font-size:15.70px;color:#141414;left:139.40px;">Debts Drawdowns</div>
<div class="s" style="top:801.55px;font-size:15.70px;color:#141414;left:139.40px;">Debts Repayments</div>
<div class="s" style="top:822.05px;font-size:15.70px;color:#141414;left:139.40px;">Equity Raisings</div>
<div class="s" style="top:842.05px;font-size:15.70px;color:#141414;left:139.40px;">Equity Buybacks</div>
<div class="s" style="top:862.05px;font-size:15.70px;color:#141414;left:139.40px;">Dividends Paid</div>
<div class="t" style="top:880.37px;font-size:17.10px;color:#ffffff;font-weight:bold;left:146.30px;">Net Cash Flow from Financing Activities</div>
<div class="t" style="top:917.87px;font-size:17.10px;color:#ffffff;font-weight:bold;left:146.30px;">Net Increase/(Decrease) in Cash Held</div>
<div class="t" style="top:974.03px;font-size:20.20px;color:#1c1c1c;font-weight:bold;left:114.20px;transform:scaleX(1.0614);transform-origin:0 0;">Cash Flow Statement (indirect method), $</div>
<div class="t" style="top:1012.26px;font-size:18.40px;color:#1c1c1c;font-weight:bold;left:126.40px;transform:scaleX(1.0108);transform-origin:0 0;">Operating Activities</div>
<div class="s" style="top:1034.05px;font-size:15.70px;color:#141414;left:139.40px;">Net Income Less Depreciation</div>
<div class="s" style="top:1053.55px;font-size:15.70px;color:#141414;left:139.40px;">Changes in Working Capital</div>
<div class="t" style="top:1072.36px;font-size:17.10px;color:#ffffff;font-weight:bold;left:134.50px;">Total Operating Activities</div>
<div class="t" style="top:1116.76px;font-size:18.40px;color:#1c1c1c;font-weight:bold;left:126.40px;">Investing Activities</div>
<div class="s" style="top:1138.05px;font-size:15.70px;color:#141414;left:139.40px;">Capital Expenditure</div>
<div class="t" style="top:1157.36px;font-size:17.10px;color:#ffffff;font-weight:bold;left:134.50px;">Total Cash From (For) Investing Activities</div>
<div class="t" style="top:1200.76px;font-size:18.40px;color:#1c1c1c;font-weight:bold;left:126.40px;">Financing Activities</div>
<div class="s" style="top:1222.65px;font-size:15.70px;color:#141414;left:139.40px;">Equity Investment</div>
<div class="s" style="top:1241.35px;font-size:15.70px;color:#141414;left:139.40px;">Loans</div>
<div class="s" style="top:1260.15px;font-size:15.70px;color:#141414;left:139.40px;">Dividends Paid</div>
<div class="t" style="top:1280.36px;font-size:17.10px;color:#ffffff;font-weight:bold;left:134.50px;">Total Cash From (For) Financing Activities</div>
<div class="t" style="top:1323.76px;font-size:18.40px;color:#1c1c1c;font-weight:bold;left:126.40px;">Cash Movement</div>
<div class="s" style="top:1348.25px;font-size:15.70px;color:#141414;left:139.40px;">Cash and Cash Equivalents Beginning</div>
<div class="s" style="top:1370.65px;font-size:15.70px;color:#141414;left:139.40px;">Net (Increase) Decrease In Cash</div>
<div class="t" style="top:1392.36px;font-size:17.10px;color:#ffffff;font-weight:bold;left:134.60px;">Total Cash and Cash Equivalents End</div>
<div class="t" style="top:1450.75px;font-size:21.00px;color:#1c1c1c;font-weight:bold;left:127.80px;transform:scaleX(1.0093);transform-origin:0 0;">Interest on Cash Breakdown</div>
<div class="s" style="top:1489.05px;font-size:15.70px;color:#141414;left:139.40px;">Net Cash Flow from Investing Activities</div>
<div class="s" style="top:1509.55px;font-size:15.70px;color:#141414;left:139.40px;">Net Cash Flow from Financing Activities</div>
<div class="s" style="top:1529.65px;font-size:15.70px;color:#141414;left:139.40px;">Cash Receipts</div>
<div class="s" style="top:1549.85px;font-size:15.70px;color:#141414;left:139.40px;">Cash Payments</div>
<div class="s" style="top:1569.05px;font-size:15.70px;color:#141414;left:139.40px;">Change in Cash (Pre-Corporate Tax &amp; Interest on Cash)</div>
<div class="s" style="top:1589.55px;font-size:15.70px;color:#141414;left:139.40px;">Interest Expense</div>
<div class="s" style="top:1609.55px;font-size:15.70px;color:#141414;left:139.40px;">Corporate Tax Expense</div>
<div class="t" style="top:1627.36px;font-size:17.10px;color:#ffffff;font-weight:bold;left:146.50px;">Net Increase/(Decrease) in Cash Held</div>
<div class="t" style="top:420.41px;font-size:16.70px;color:#000000;font-weight:bold;left:881.05px;transform:scaleX(1.0400);transform-origin:100% 0;">2026</div>
<div class="t" style="top:439.41px;font-size:16.70px;color:#000000;font-weight:bold;left:865.29px;transform:scaleX(1.0300);transform-origin:100% 0;">Jan-26</div>
<div class="t" style="top:420.41px;font-size:16.70px;color:#000000;font-weight:bold;left:1000.05px;transform:scaleX(1.0400);transform-origin:100% 0;">2026</div>
<div class="t" style="top:439.41px;font-size:16.70px;color:#000000;font-weight:bold;left:983.37px;transform:scaleX(1.0300);transform-origin:100% 0;">Feb-26</div>
<div class="t" style="top:420.41px;font-size:16.70px;color:#000000;font-weight:bold;left:1119.05px;transform:scaleX(1.0400);transform-origin:100% 0;">2026</div>
<div class="t" style="top:439.41px;font-size:16.70px;color:#000000;font-weight:bold;left:1102.36px;transform:scaleX(1.0300);transform-origin:100% 0;">Mar-26</div>
<div class="t" style="top:420.41px;font-size:16.70px;color:#000000;font-weight:bold;left:1238.05px;transform:scaleX(1.0400);transform-origin:100% 0;">2026</div>
<div class="t" style="top:439.41px;font-size:16.70px;color:#000000;font-weight:bold;left:1222.30px;transform:scaleX(1.0300);transform-origin:100% 0;">Apr-26</div>
<div class="t" style="top:420.41px;font-size:16.70px;color:#000000;font-weight:bold;left:1357.05px;transform:scaleX(1.0400);transform-origin:100% 0;">2026</div>
<div class="t" style="top:439.41px;font-size:16.70px;color:#000000;font-weight:bold;left:1337.58px;transform:scaleX(1.0300);transform-origin:100% 0;">May-26</div>
<div class="t" style="top:420.41px;font-size:16.70px;color:#000000;font-weight:bold;left:1476.05px;transform:scaleX(1.0400);transform-origin:100% 0;">2026</div>
<div class="t" style="top:439.41px;font-size:16.70px;color:#000000;font-weight:bold;left:1459.37px;transform:scaleX(1.0300);transform-origin:100% 0;">Jun-26</div>
<div class="t" style="top:420.41px;font-size:16.70px;color:#000000;font-weight:bold;left:1595.05px;transform:scaleX(1.0400);transform-origin:100% 0;">2026</div>
<div class="t" style="top:439.41px;font-size:16.70px;color:#000000;font-weight:bold;left:1583.93px;transform:scaleX(1.0300);transform-origin:100% 0;">Jul-26</div>
<div class="t" style="top:420.41px;font-size:16.70px;color:#000000;font-weight:bold;left:1714.05px;transform:scaleX(1.0400);transform-origin:100% 0;">2026</div>
<div class="t" style="top:439.41px;font-size:16.70px;color:#000000;font-weight:bold;left:1694.60px;transform:scaleX(1.0300);transform-origin:100% 0;">Aug-26</div>
<div class="t" style="top:420.41px;font-size:16.70px;color:#000000;font-weight:bold;left:1833.05px;transform:scaleX(1.0400);transform-origin:100% 0;">2026</div>
<div class="t" style="top:439.41px;font-size:16.70px;color:#000000;font-weight:bold;left:1815.44px;transform:scaleX(1.0300);transform-origin:100% 0;">Sep-26</div>
<div class="t" style="top:420.41px;font-size:16.70px;color:#000000;font-weight:bold;left:1952.05px;transform:scaleX(1.0400);transform-origin:100% 0;">2026</div>
<div class="t" style="top:439.41px;font-size:16.70px;color:#000000;font-weight:bold;left:1937.22px;transform:scaleX(1.0300);transform-origin:100% 0;">Oct-26</div>
<div class="t" style="top:420.41px;font-size:16.70px;color:#000000;font-weight:bold;left:2071.05px;transform:scaleX(1.0400);transform-origin:100% 0;">2026</div>
<div class="t" style="top:439.41px;font-size:16.70px;color:#000000;font-weight:bold;left:2052.51px;transform:scaleX(1.0300);transform-origin:100% 0;">Nov-26</div>
<div class="t" style="top:420.41px;font-size:16.70px;color:#000000;font-weight:bold;left:2190.05px;transform:scaleX(1.0400);transform-origin:100% 0;">2026</div>
<div class="t" style="top:439.41px;font-size:16.70px;color:#000000;font-weight:bold;left:2172.43px;transform:scaleX(1.0300);transform-origin:100% 0;">Dec-26</div>
<div class="t" style="top:420.41px;font-size:16.70px;color:#000000;font-weight:bold;left:2309.05px;transform:scaleX(1.0400);transform-origin:100% 0;">2027</div>
<div class="t" style="top:439.41px;font-size:16.70px;color:#000000;font-weight:bold;left:2293.29px;transform:scaleX(1.0300);transform-origin:100% 0;">Jan-27</div>
<div class="t" style="top:420.41px;font-size:16.70px;color:#000000;font-weight:bold;left:2428.05px;transform:scaleX(1.0400);transform-origin:100% 0;">2027</div>
<div class="t" style="top:439.41px;font-size:16.70px;color:#000000;font-weight:bold;left:2411.37px;transform:scaleX(1.0300);transform-origin:100% 0;">Feb-27</div>
<div class="t" style="top:420.41px;font-size:16.70px;color:#000000;font-weight:bold;left:2547.05px;transform:scaleX(1.0400);transform-origin:100% 0;">2027</div>
<div class="t" style="top:439.41px;font-size:16.70px;color:#000000;font-weight:bold;left:2530.36px;transform:scaleX(1.0300);transform-origin:100% 0;">Mar-27</div>
<div class="t" style="top:420.41px;font-size:16.70px;color:#000000;font-weight:bold;left:2666.05px;transform:scaleX(1.0400);transform-origin:100% 0;">2027</div>
<div class="t" style="top:439.41px;font-size:16.70px;color:#000000;font-weight:bold;left:2650.30px;transform:scaleX(1.0300);transform-origin:100% 0;">Apr-27</div>
<div class="t" style="top:420.41px;font-size:16.70px;color:#000000;font-weight:bold;left:2785.05px;transform:scaleX(1.0400);transform-origin:100% 0;">2027</div>
<div class="t" style="top:439.41px;font-size:16.70px;color:#000000;font-weight:bold;left:2765.58px;transform:scaleX(1.0300);transform-origin:100% 0;">May-27</div>
<div class="s" style="top:549.12px;font-size:14.10px;color:#141414;left:871.27px;">22,730</div>
<div class="s" style="top:549.12px;font-size:14.10px;color:#141414;left:990.27px;">41,757</div>
<div class="s" style="top:549.12px;font-size:14.10px;color:#141414;left:1109.27px;">46,323</div>
<div class="s" style="top:549.12px;font-size:14.10px;color:#141414;left:1228.27px;">43,330</div>
<div class="s" style="top:549.12px;font-size:14.10px;color:#141414;left:1347.27px;">44,750</div>
<div class="s" style="top:549.12px;font-size:14.10px;color:#141414;left:1466.27px;">43,330</div>
<div class="s" style="top:549.12px;font-size:14.10px;color:#141414;left:1585.27px;">44,750</div>
<div class="s" style="top:549.12px;font-size:14.10px;color:#141414;left:1704.27px;">44,040</div>
<div class="s" style="top:549.12px;font-size:14.10px;color:#141414;left:1823.27px;">43,330</div>
<div class="s" style="top:549.12px;font-size:14.10px;color:#141414;left:1942.27px;">44,750</div>
<div class="s" style="top:549.12px;font-size:14.10px;color:#141414;left:2061.27px;">43,330</div>
<div class="s" style="top:549.12px;font-size:14.10px;color:#141414;left:2180.27px;">44,750</div>
<div class="s" style="top:549.12px;font-size:14.10px;color:#141414;left:2299.27px;">70,620</div>
<div class="s" style="top:549.12px;font-size:14.10px;color:#141414;left:2418.27px;">90,586</div>
<div class="s" style="top:549.12px;font-size:14.10px;color:#141414;left:2529.43px;">100,492</div>
<div class="s" style="top:549.12px;font-size:14.10px;color:#141414;left:2656.27px;">93,998</div>
<div class="s" style="top:549.12px;font-size:14.10px;color:#141414;left:2775.27px;">97,080</div>
<div class="s" style="top:570.41px;font-size:14.10px;color:#141414;left:867.08px;">(24,854)</div>
<div class="s" style="top:570.41px;font-size:14.10px;color:#141414;left:986.08px;">(44,921)</div>
<div class="s" style="top:570.41px;font-size:14.10px;color:#141414;left:1105.08px;">(49,737)</div>
<div class="s" style="top:570.41px;font-size:14.10px;color:#141414;left:1224.08px;">(46,579)</div>
<div class="s" style="top:570.41px;font-size:14.10px;color:#141414;left:1343.08px;">(48,078)</div>
<div class="s" style="top:570.41px;font-size:14.10px;color:#141414;left:1462.08px;">(46,579)</div>
<div class="s" style="top:570.41px;font-size:14.10px;color:#141414;left:1581.08px;">(48,078)</div>
<div class="s" style="top:570.41px;font-size:14.10px;color:#141414;left:1700.08px;">(47,329)</div>
<div class="s" style="top:570.41px;font-size:14.10px;color:#141414;left:1819.08px;">(46,579)</div>
<div class="s" style="top:570.41px;font-size:14.10px;color:#141414;left:1938.08px;">(48,078)</div>
<div class="s" style="top:570.41px;font-size:14.10px;color:#141414;left:2057.08px;">(46,579)</div>
<div class="s" style="top:570.41px;font-size:14.10px;color:#141414;left:2176.08px;">(48,078)</div>
<div class="s" style="top:570.41px;font-size:14.10px;color:#141414;left:2295.08px;">(60,548)</div>
<div class="s" style="top:570.41px;font-size:14.10px;color:#141414;left:2414.08px;">(68,344)</div>
<div class="s" style="top:570.41px;font-size:14.10px;color:#141414;left:2533.08px;">(75,609)</div>
<div class="s" style="top:570.41px;font-size:14.10px;color:#141414;left:2652.08px;">(70,846)</div>
<div class="s" style="top:570.41px;font-size:14.10px;color:#141414;left:2771.08px;">(73,106)</div>
<div class="s" style="top:590.62px;font-size:14.10px;color:#141414;left:874.92px;">(1,000)</div>
<div class="s" style="top:590.62px;font-size:14.10px;color:#141414;left:993.92px;">(1,000)</div>
<div class="s" style="top:590.62px;font-size:14.10px;color:#141414;left:1112.92px;">(1,667)</div>
<div class="s" style="top:590.62px;font-size:14.10px;color:#141414;left:1231.92px;">(1,656)</div>
<div class="s" style="top:590.62px;font-size:14.10px;color:#141414;left:1350.92px;">(1,644)</div>
<div class="s" style="top:590.62px;font-size:14.10px;color:#141414;left:1469.92px;">(1,633)</div>
<div class="s" style="top:590.62px;font-size:14.10px;color:#141414;left:1588.92px;">(1,622)</div>
<div class="s" style="top:590.62px;font-size:14.10px;color:#141414;left:1708.97px;">(1,611)</div>
<div class="s" style="top:590.62px;font-size:14.10px;color:#141414;left:1826.92px;">(1,600)</div>
<div class="s" style="top:590.62px;font-size:14.10px;color:#141414;left:1945.92px;">(1,589)</div>
<div class="s" style="top:590.62px;font-size:14.10px;color:#141414;left:2064.92px;">(1,578)</div>
<div class="s" style="top:590.62px;font-size:14.10px;color:#141414;left:2183.92px;">(1,567)</div>
<div class="s" style="top:590.62px;font-size:14.10px;color:#141414;left:2302.92px;">(1,556)</div>
<div class="s" style="top:590.62px;font-size:14.10px;color:#141414;left:2421.92px;">(1,534)</div>
<div class="s" style="top:590.62px;font-size:14.10px;color:#141414;left:2540.92px;">(1,512)</div>
<div class="s" style="top:590.62px;font-size:14.10px;color:#141414;left:2659.92px;">(1,491)</div>
<div class="s" style="top:590.62px;font-size:14.10px;color:#141414;left:2778.92px;">(1,469)</div>
<div class="a" style="left:910.50px;top:617.00px;width:4.20px;height:1.00px;background:#2a2a2a;"></div>
<div class="a" style="left:1029.50px;top:617.00px;width:4.20px;height:1.00px;background:#2a2a2a;"></div>
<div class="a" style="left:1148.50px;top:617.00px;width:4.20px;height:1.00px;background:#2a2a2a;"></div>
<div class="a" style="left:1267.50px;top:617.00px;width:4.20px;height:1.00px;background:#2a2a2a;"></div>
<div class="a" style="left:1386.50px;top:617.00px;width:4.20px;height:1.00px;background:#2a2a2a;"></div>
<div class="a" style="left:1505.50px;top:617.00px;width:4.20px;height:1.00px;background:#2a2a2a;"></div>
<div class="a" style="left:1624.50px;top:617.00px;width:4.20px;height:1.00px;background:#2a2a2a;"></div>
<div class="a" style="left:1743.50px;top:617.00px;width:4.20px;height:1.00px;background:#2a2a2a;"></div>
<div class="a" style="left:1862.50px;top:617.00px;width:4.20px;height:1.00px;background:#2a2a2a;"></div>
<div class="a" style="left:1981.50px;top:617.00px;width:4.20px;height:1.00px;background:#2a2a2a;"></div>
<div class="a" style="left:2100.50px;top:617.00px;width:4.20px;height:1.00px;background:#2a2a2a;"></div>
<div class="a" style="left:2219.50px;top:617.00px;width:4.20px;height:1.00px;background:#2a2a2a;"></div>
<div class="s" style="top:610.62px;font-size:14.10px;color:#141414;left:2302.92px;">(5,366)</div>
<div class="s" style="top:610.62px;font-size:14.10px;color:#141414;left:2421.92px;">(5,372)</div>
<div class="s" style="top:610.62px;font-size:14.10px;color:#141414;left:2540.92px;">(5,377)</div>
<div class="s" style="top:610.62px;font-size:14.10px;color:#141414;left:2659.92px;">(5,383)</div>
<div class="s" style="top:610.62px;font-size:14.10px;color:#141414;left:2778.92px;">(5,388)</div>
<div class="t" style="top:628.23px;font-size:17.50px;color:#ffffff;font-weight:bold;left:863.05px;transform:scaleX(1.0400);transform-origin:100% 0;">(3,124)</div>
<div class="t" style="top:628.23px;font-size:17.50px;color:#ffffff;font-weight:bold;left:982.05px;transform:scaleX(1.0400);transform-origin:100% 0;">(4,164)</div>
<div class="t" style="top:628.23px;font-size:17.50px;color:#ffffff;font-weight:bold;left:1101.05px;transform:scaleX(1.0400);transform-origin:100% 0;">(5,080)</div>
<div class="t" style="top:628.23px;font-size:17.50px;color:#ffffff;font-weight:bold;left:1220.05px;transform:scaleX(1.0400);transform-origin:100% 0;">(4,905)</div>
<div class="t" style="top:628.23px;font-size:17.50px;color:#ffffff;font-weight:bold;left:1339.05px;transform:scaleX(1.0400);transform-origin:100% 0;">(4,972)</div>
<div class="t" style="top:628.23px;font-size:17.50px;color:#ffffff;font-weight:bold;left:1458.05px;transform:scaleX(1.0400);transform-origin:100% 0;">(4,883)</div>
<div class="t" style="top:628.23px;font-size:17.50px;color:#ffffff;font-weight:bold;left:1577.05px;transform:scaleX(1.0400);transform-origin:100% 0;">(4,950)</div>
<div class="t" style="top:628.23px;font-size:17.50px;color:#ffffff;font-weight:bold;left:1696.05px;transform:scaleX(1.0400);transform-origin:100% 0;">(4,900)</div>
<div class="t" style="top:628.23px;font-size:17.50px;color:#ffffff;font-weight:bold;left:1815.05px;transform:scaleX(1.0400);transform-origin:100% 0;">(4,850)</div>
<div class="t" style="top:628.23px;font-size:17.50px;color:#ffffff;font-weight:bold;left:1934.05px;transform:scaleX(1.0400);transform-origin:100% 0;">(4,916)</div>
<div class="t" style="top:628.23px;font-size:17.50px;color:#ffffff;font-weight:bold;left:2053.05px;transform:scaleX(1.0400);transform-origin:100% 0;">(4,827)</div>
<div class="t" style="top:628.23px;font-size:17.50px;color:#ffffff;font-weight:bold;left:2172.05px;transform:scaleX(1.0400);transform-origin:100% 0;">(4,894)</div>
<div class="t" style="top:628.23px;font-size:17.50px;color:#ffffff;font-weight:bold;left:2296.21px;transform:scaleX(1.0400);transform-origin:100% 0;">3,150</div>
<div class="t" style="top:628.23px;font-size:17.50px;color:#ffffff;font-weight:bold;left:2405.47px;transform:scaleX(1.0400);transform-origin:100% 0;">15,337</div>
<div class="t" style="top:628.23px;font-size:17.50px;color:#ffffff;font-weight:bold;left:2524.47px;transform:scaleX(1.0400);transform-origin:100% 0;">17,994</div>
<div class="t" style="top:628.23px;font-size:17.50px;color:#ffffff;font-weight:bold;left:2643.47px;transform:scaleX(1.0400);transform-origin:100% 0;">16,279</div>
<div class="t" style="top:628.23px;font-size:17.50px;color:#ffffff;font-weight:bold;left:2763.44px;transform:scaleX(1.0400);transform-origin:100% 0;">17,117</div>
<div class="s" style="top:693.91px;font-size:14.10px;color:#141414;left:867.08px;">(14,333)</div>
<div class="s" style="top:693.91px;font-size:14.10px;color:#141414;left:986.08px;">(20,333)</div>
<div class="s" style="top:693.91px;font-size:14.10px;color:#141414;left:1105.08px;">(17,833)</div>
<div class="s" style="top:693.91px;font-size:14.10px;color:#141414;left:1231.92px;">(9,000)</div>
<div class="s" style="top:693.91px;font-size:14.10px;color:#141414;left:1350.92px;">(3,500)</div>
<div class="a" style="left:1505.50px;top:700.00px;width:4.20px;height:1.00px;background:#2a2a2a;"></div>
<div class="a" style="left:1624.50px;top:700.00px;width:4.20px;height:1.00px;background:#2a2a2a;"></div>
<div class="a" style="left:1743.50px;top:700.00px;width:4.20px;height:1.00px;background:#2a2a2a;"></div>
<div class="a" style="left:1862.50px;top:700.00px;width:4.20px;height:1.00px;background:#2a2a2a;"></div>
<div class="a" style="left:1981.50px;top:700.00px;width:4.20px;height:1.00px;background:#2a2a2a;"></div>
<div class="a" style="left:2100.50px;top:700.00px;width:4.20px;height:1.00px;background:#2a2a2a;"></div>
<div class="a" style="left:2219.50px;top:700.00px;width:4.20px;height:1.00px;background:#2a2a2a;"></div>
<div class="a" style="left:2338.50px;top:700.00px;width:4.20px;height:1.00px;background:#2a2a2a;"></div>
<div class="a" style="left:2457.50px;top:700.00px;width:4.20px;height:1.00px;background:#2a2a2a;"></div>
<div class="a" style="left:2576.50px;top:700.00px;width:4.20px;height:1.00px;background:#2a2a2a;"></div>
<div class="a" style="left:2695.50px;top:700.00px;width:4.20px;height:1.00px;background:#2a2a2a;"></div>
<div class="a" style="left:2814.50px;top:700.00px;width:4.20px;height:1.00px;background:#2a2a2a;"></div>
<div class="t" style="top:716.23px;font-size:17.50px;color:#ffffff;font-weight:bold;left:853.32px;transform:scaleX(1.0400);transform-origin:100% 0;">(14,333)</div>
<div class="t" style="top:716.23px;font-size:17.50px;color:#ffffff;font-weight:bold;left:972.32px;transform:scaleX(1.0400);transform-origin:100% 0;">(20,333)</div>
<div class="t" style="top:716.23px;font-size:17.50px;color:#ffffff;font-weight:bold;left:1091.32px;transform:scaleX(1.0400);transform-origin:100% 0;">(17,833)</div>
<div class="t" style="top:716.23px;font-size:17.50px;color:#ffffff;font-weight:bold;left:1220.05px;transform:scaleX(1.0400);transform-origin:100% 0;">(9,000)</div>
<div class="t" style="top:716.23px;font-size:17.50px;color:#ffffff;font-weight:bold;left:1339.05px;transform:scaleX(1.0400);transform-origin:100% 0;">(3,500)</div>
<div class="a" style="left:1500.00px;top:724.90px;width:7.00px;height:1.60px;background:#ffffff;"></div>
<div class="a" style="left:1619.00px;top:724.90px;width:7.00px;height:1.60px;background:#ffffff;"></div>
<div class="a" style="left:1738.00px;top:724.90px;width:7.00px;height:1.60px;background:#ffffff;"></div>
<div class="a" style="left:1857.00px;top:724.90px;width:7.00px;height:1.60px;background:#ffffff;"></div>
<div class="a" style="left:1976.00px;top:724.90px;width:7.00px;height:1.60px;background:#ffffff;"></div>
<div class="a" style="left:2095.00px;top:724.90px;width:7.00px;height:1.60px;background:#ffffff;"></div>
<div class="a" style="left:2214.00px;top:724.90px;width:7.00px;height:1.60px;background:#ffffff;"></div>
<div class="a" style="left:2333.00px;top:724.90px;width:7.00px;height:1.60px;background:#ffffff;"></div>
<div class="a" style="left:2452.00px;top:724.90px;width:7.00px;height:1.60px;background:#ffffff;"></div>
<div class="a" style="left:2571.00px;top:724.90px;width:7.00px;height:1.60px;background:#ffffff;"></div>
<div class="a" style="left:2690.00px;top:724.90px;width:7.00px;height:1.60px;background:#ffffff;"></div>
<div class="a" style="left:2809.00px;top:724.90px;width:7.00px;height:1.60px;background:#ffffff;"></div>
<div class="s" style="top:781.91px;font-size:14.10px;color:#141414;left:863.43px;">200,000</div>
<div class="a" style="left:1029.50px;top:788.00px;width:4.20px;height:1.00px;background:#2a2a2a;"></div>
<div class="s" style="top:781.91px;font-size:14.10px;color:#141414;left:1101.43px;">100,000</div>
<div class="a" style="left:1267.50px;top:788.00px;width:4.20px;height:1.00px;background:#2a2a2a;"></div>
<div class="a" style="left:1386.50px;top:788.00px;width:4.20px;height:1.00px;background:#2a2a2a;"></div>
<div class="a" style="left:1505.50px;top:788.00px;width:4.20px;height:1.00px;background:#2a2a2a;"></div>
<div class="a" style="left:1624.50px;top:788.00px;width:4.20px;height:1.00px;background:#2a2a2a;"></div>
<div class="a" style="left:1743.50px;top:788.00px;width:4.20px;height:1.00px;background:#2a2a2a;"></div>
<div class="a" style="left:1862.50px;top:788.00px;width:4.20px;height:1.00px;background:#2a2a2a;"></div>
<div class="a" style="left:1981.50px;top:788.00px;width:4.20px;height:1.00px;background:#2a2a2a;"></div>
<div class="a" style="left:2100.50px;top:788.00px;width:4.20px;height:1.00px;background:#2a2a2a;"></div>
<div class="a" style="left:2219.50px;top:788.00px;width:4.20px;height:1.00px;background:#2a2a2a;"></div>
<div class="a" style="left:2338.50px;top:788.00px;width:4.20px;height:1.00px;background:#2a2a2a;"></div>
<div class="a" style="left:2457.50px;top:788.00px;width:4.20px;height:1.00px;background:#2a2a2a;"></div>
<div class="a" style="left:2576.50px;top:788.00px;width:4.20px;height:1.00px;background:#2a2a2a;"></div>
<div class="a" style="left:2695.50px;top:788.00px;width:4.20px;height:1.00px;background:#2a2a2a;"></div>
<div class="a" style="left:2814.50px;top:788.00px;width:4.20px;height:1.00px;background:#2a2a2a;"></div>
<div class="a" style="left:910.50px;top:809.00px;width:4.20px;height:1.00px;background:#2a2a2a;"></div>
<div class="a" style="left:1029.50px;top:809.00px;width:4.20px;height:1.00px;background:#2a2a2a;"></div>
<div class="s" style="top:802.12px;font-size:14.10px;color:#141414;left:1112.92px;">(1,667)</div>
<div class="s" style="top:802.12px;font-size:14.10px;color:#141414;left:1231.92px;">(1,667)</div>
<div class="s" style="top:802.12px;font-size:14.10px;color:#141414;left:1350.92px;">(1,667)</div>
<div class="s" style="top:802.12px;font-size:14.10px;color:#141414;left:1469.92px;">(1,667)</div>
<div class="s" style="top:802.12px;font-size:14.10px;color:#141414;left:1588.92px;">(1,667)</div>
<div class="s" style="top:802.12px;font-size:14.10px;color:#141414;left:1707.92px;">(1,667)</div>
<div class="s" style="top:802.12px;font-size:14.10px;color:#141414;left:1826.92px;">(1,667)</div>
<div class="s" style="top:802.12px;font-size:14.10px;color:#141414;left:1945.92px;">(1,667)</div>
<div class="s" style="top:802.12px;font-size:14.10px;color:#141414;left:2064.92px;">(1,667)</div>
<div class="s" style="top:802.12px;font-size:14.10px;color:#141414;left:2183.92px;">(1,667)</div>
<div class="s" style="top:802.12px;font-size:14.10px;color:#141414;left:2302.92px;">(3,770)</div>
<div class="s" style="top:802.12px;font-size:14.10px;color:#141414;left:2421.92px;">(3,780)</div>
<div class="s" style="top:802.12px;font-size:14.10px;color:#141414;left:2540.92px;">(3,791)</div>
<div class="s" style="top:802.12px;font-size:14.10px;color:#141414;left:2659.92px;">(3,801)</div>
<div class="s" style="top:802.12px;font-size:14.10px;color:#141414;left:2778.92px;">(3,812)</div>
<div class="s" style="top:822.62px;font-size:14.10px;color:#141414;left:863.43px;">700,000</div>
<div class="a" style="left:1029.50px;top:829.00px;width:4.20px;height:1.00px;background:#2a2a2a;"></div>
<div class="a" style="left:1148.50px;top:829.00px;width:4.20px;height:1.00px;background:#2a2a2a;"></div>
<div class="a" style="left:1267.50px;top:829.00px;width:4.20px;height:1.00px;background:#2a2a2a;"></div>
<div class="a" style="left:1386.50px;top:829.00px;width:4.20px;height:1.00px;background:#2a2a2a;"></div>
<div class="a" style="left:1505.50px;top:829.00px;width:4.20px;height:1.00px;background:#2a2a2a;"></div>
<div class="a" style="left:1624.50px;top:829.00px;width:4.20px;height:1.00px;background:#2a2a2a;"></div>
<div class="a" style="left:1743.50px;top:829.00px;width:4.20px;height:1.00px;background:#2a2a2a;"></div>
<div class="a" style="left:1862.50px;top:829.00px;width:4.20px;height:1.00px;background:#2a2a2a;"></div>
<div class="a" style="left:1981.50px;top:829.00px;width:4.20px;height:1.00px;background:#2a2a2a;"></div>
<div class="a" style="left:2100.50px;top:829.00px;width:4.20px;height:1.00px;background:#2a2a2a;"></div>
<div class="a" style="left:2219.50px;top:829.00px;width:4.20px;height:1.00px;background:#2a2a2a;"></div>
<div class="a" style="left:2338.50px;top:829.00px;width:4.20px;height:1.00px;background:#2a2a2a;"></div>
<div class="a" style="left:2457.50px;top:829.00px;width:4.20px;height:1.00px;background:#2a2a2a;"></div>
<div class="a" style="left:2576.50px;top:829.00px;width:4.20px;height:1.00px;background:#2a2a2a;"></div>
<div class="a" style="left:2695.50px;top:829.00px;width:4.20px;height:1.00px;background:#2a2a2a;"></div>
<div class="a" style="left:2814.50px;top:829.00px;width:4.20px;height:1.00px;background:#2a2a2a;"></div>
<div class="a" style="left:910.50px;top:849.00px;width:4.20px;height:1.00px;background:#2a2a2a;"></div>
<div class="a" style="left:1029.50px;top:849.00px;width:4.20px;height:1.00px;background:#2a2a2a;"></div>
<div class="a" style="left:1148.50px;top:849.00px;width:4.20px;height:1.00px;background:#2a2a2a;"></div>
<div class="a" style="left:1267.50px;top:849.00px;width:4.20px;height:1.00px;background:#2a2a2a;"></div>
<div class="a" style="left:1386.50px;top:849.00px;width:4.20px;height:1.00px;background:#2a2a2a;"></div>
<div class="a" style="left:1505.50px;top:849.00px;width:4.20px;height:1.00px;background:#2a2a2a;"></div>
<div class="a" style="left:1624.50px;top:849.00px;width:4.20px;height:1.00px;background:#2a2a2a;"></div>
<div class="a" style="left:1743.50px;top:849.00px;width:4.20px;height:1.00px;background:#2a2a2a;"></div>
<div class="a" style="left:1862.50px;top:849.00px;width:4.20px;height:1.00px;background:#2a2a2a;"></div>
<div class="a" style="left:1981.50px;top:849.00px;width:4.20px;height:1.00px;background:#2a2a2a;"></div>
<div class="a" style="left:2100.50px;top:849.00px;width:4.20px;height:1.00px;background:#2a2a2a;"></div>
<div class="a" style="left:2219.50px;top:849.00px;width:4.20px;height:1.00px;background:#2a2a2a;"></div>
<div class="a" style="left:2338.50px;top:849.00px;width:4.20px;height:1.00px;background:#2a2a2a;"></div>
<div class="a" style="left:2457.50px;top:849.00px;width:4.20px;height:1.00px;background:#2a2a2a;"></div>
<div class="a" style="left:2576.50px;top:849.00px;width:4.20px;height:1.00px;background:#2a2a2a;"></div>
<div class="a" style="left:2695.50px;top:849.00px;width:4.20px;height:1.00px;background:#2a2a2a;"></div>
<div class="a" style="left:2814.50px;top:849.00px;width:4.20px;height:1.00px;background:#2a2a2a;"></div>
<div class="a" style="left:910.50px;top:869.00px;width:4.20px;height:1.00px;background:#2a2a2a;"></div>
<div class="a" style="left:1029.50px;top:869.00px;width:4.20px;height:1.00px;background:#2a2a2a;"></div>
<div class="a" style="left:1148.50px;top:869.00px;width:4.20px;height:1.00px;background:#2a2a2a;"></div>
<div class="a" style="left:1267.50px;top:869.00px;width:4.20px;height:1.00px;background:#2a2a2a;"></div>
<div class="a" style="left:1386.50px;top:869.00px;width:4.20px;height:1.00px;background:#2a2a2a;"></div>
<div class="a" style="left:1505.50px;top:869.00px;width:4.20px;height:1.00px;background:#2a2a2a;"></div>
<div class="a" style="left:1624.50px;top:869.00px;width:4.20px;height:1.00px;background:#2a2a2a;"></div>
<div class="a" style="left:1743.50px;top:869.00px;width:4.20px;height:1.00px;background:#2a2a2a;"></div>
<div class="a" style="left:1862.50px;top:869.00px;width:4.20px;height:1.00px;background:#2a2a2a;"></div>
<div class="a" style="left:1981.50px;top:869.00px;width:4.20px;height:1.00px;background:#2a2a2a;"></div>
<div class="a" style="left:2100.50px;top:869.00px;width:4.20px;height:1.00px;background:#2a2a2a;"></div>
<div class="a" style="left:2219.50px;top:869.00px;width:4.20px;height:1.00px;background:#2a2a2a;"></div>
<div class="a" style="left:2338.50px;top:869.00px;width:4.20px;height:1.00px;background:#2a2a2a;"></div>
<div class="a" style="left:2457.50px;top:869.00px;width:4.20px;height:1.00px;background:#2a2a2a;"></div>
<div class="a" style="left:2576.50px;top:869.00px;width:4.20px;height:1.00px;background:#2a2a2a;"></div>
<div class="a" style="left:2695.50px;top:869.00px;width:4.20px;height:1.00px;background:#2a2a2a;"></div>
<div class="a" style="left:2814.50px;top:869.00px;width:4.20px;height:1.00px;background:#2a2a2a;"></div>
<div class="t" style="top:880.32px;font-size:17.50px;color:#ffffff;font-weight:bold;left:848.74px;transform:scaleX(1.0400);transform-origin:100% 0;">900,000</div>
<div class="a" style="left:1024.00px;top:888.90px;width:7.00px;height:1.60px;background:#ffffff;"></div>
<div class="t" style="top:880.32px;font-size:17.50px;color:#ffffff;font-weight:bold;left:1096.47px;transform:scaleX(1.0400);transform-origin:100% 0;">98,333</div>
<div class="t" style="top:880.32px;font-size:17.50px;color:#ffffff;font-weight:bold;left:1220.05px;transform:scaleX(1.0400);transform-origin:100% 0;">(1,667)</div>
<div class="t" style="top:880.32px;font-size:17.50px;color:#ffffff;font-weight:bold;left:1339.05px;transform:scaleX(1.0400);transform-origin:100% 0;">(1,667)</div>
<div class="t" style="top:880.32px;font-size:17.50px;color:#ffffff;font-weight:bold;left:1458.05px;transform:scaleX(1.0400);transform-origin:100% 0;">(1,667)</div>
<div class="t" style="top:880.32px;font-size:17.50px;color:#ffffff;font-weight:bold;left:1577.05px;transform:scaleX(1.0400);transform-origin:100% 0;">(1,667)</div>
<div class="t" style="top:880.32px;font-size:17.50px;color:#ffffff;font-weight:bold;left:1696.05px;transform:scaleX(1.0400);transform-origin:100% 0;">(1,667)</div>
<div class="t" style="top:880.32px;font-size:17.50px;color:#ffffff;font-weight:bold;left:1815.05px;transform:scaleX(1.0400);transform-origin:100% 0;">(1,667)</div>
<div class="t" style="top:880.32px;font-size:17.50px;color:#ffffff;font-weight:bold;left:1934.05px;transform:scaleX(1.0400);transform-origin:100% 0;">(1,667)</div>
<div class="t" style="top:880.32px;font-size:17.50px;color:#ffffff;font-weight:bold;left:2053.05px;transform:scaleX(1.0400);transform-origin:100% 0;">(1,667)</div>
<div class="t" style="top:880.32px;font-size:17.50px;color:#ffffff;font-weight:bold;left:2172.05px;transform:scaleX(1.0400);transform-origin:100% 0;">(1,667)</div>
<div class="t" style="top:880.32px;font-size:17.50px;color:#ffffff;font-weight:bold;left:2291.05px;transform:scaleX(1.0400);transform-origin:100% 0;">(3,770)</div>
<div class="t" style="top:880.32px;font-size:17.50px;color:#ffffff;font-weight:bold;left:2410.05px;transform:scaleX(1.0400);transform-origin:100% 0;">(3,780)</div>
<div class="t" style="top:880.32px;font-size:17.50px;color:#ffffff;font-weight:bold;left:2529.05px;transform:scaleX(1.0400);transform-origin:100% 0;">(3,791)</div>
<div class="t" style="top:880.32px;font-size:17.50px;color:#ffffff;font-weight:bold;left:2648.05px;transform:scaleX(1.0400);transform-origin:100% 0;">(3,801)</div>
<div class="t" style="top:880.32px;font-size:17.50px;color:#ffffff;font-weight:bold;left:2767.05px;transform:scaleX(1.0400);transform-origin:100% 0;">(3,812)</div>
<div class="t" style="top:917.82px;font-size:17.50px;color:#ffffff;font-weight:bold;left:848.74px;transform:scaleX(1.0400);transform-origin:100% 0;">882,543</div>
<div class="t" style="top:917.82px;font-size:17.50px;color:#ffffff;font-weight:bold;left:972.32px;transform:scaleX(1.0400);transform-origin:100% 0;">(24,497)</div>
<div class="t" style="top:917.82px;font-size:17.50px;color:#ffffff;font-weight:bold;left:1096.47px;transform:scaleX(1.0400);transform-origin:100% 0;">75,420</div>
<div class="t" style="top:917.82px;font-size:17.50px;color:#ffffff;font-weight:bold;left:1210.32px;transform:scaleX(1.0400);transform-origin:100% 0;">(15,572)</div>
<div class="t" style="top:917.82px;font-size:17.50px;color:#ffffff;font-weight:bold;left:1329.32px;transform:scaleX(1.0400);transform-origin:100% 0;">(10,138)</div>
<div class="t" style="top:917.82px;font-size:17.50px;color:#ffffff;font-weight:bold;left:1458.05px;transform:scaleX(1.0400);transform-origin:100% 0;">(6,550)</div>
<div class="t" style="top:917.82px;font-size:17.50px;color:#ffffff;font-weight:bold;left:1577.05px;transform:scaleX(1.0400);transform-origin:100% 0;">(6,616)</div>
<div class="t" style="top:917.82px;font-size:17.50px;color:#ffffff;font-weight:bold;left:1696.05px;transform:scaleX(1.0400);transform-origin:100% 0;">(6,566)</div>
<div class="t" style="top:917.82px;font-size:17.50px;color:#ffffff;font-weight:bold;left:1815.05px;transform:scaleX(1.0400);transform-origin:100% 0;">(6,516)</div>
<div class="t" style="top:917.82px;font-size:17.50px;color:#ffffff;font-weight:bold;left:1934.05px;transform:scaleX(1.0400);transform-origin:100% 0;">(6,583)</div>
<div class="t" style="top:917.82px;font-size:17.50px;color:#ffffff;font-weight:bold;left:2053.05px;transform:scaleX(1.0400);transform-origin:100% 0;">(6,494)</div>
<div class="t" style="top:917.82px;font-size:17.50px;color:#ffffff;font-weight:bold;left:2172.05px;transform:scaleX(1.0400);transform-origin:100% 0;">(6,561)</div>
<div class="t" style="top:917.82px;font-size:17.50px;color:#ffffff;font-weight:bold;left:2305.65px;transform:scaleX(1.0400);transform-origin:100% 0;">(620)</div>
<div class="t" style="top:917.82px;font-size:17.50px;color:#ffffff;font-weight:bold;left:2406.44px;transform:scaleX(1.0400);transform-origin:100% 0;">11,557</div>
<div class="t" style="top:917.82px;font-size:17.50px;color:#ffffff;font-weight:bold;left:2524.47px;transform:scaleX(1.0400);transform-origin:100% 0;">14,203</div>
<div class="t" style="top:917.82px;font-size:17.50px;color:#ffffff;font-weight:bold;left:2643.47px;transform:scaleX(1.0400);transform-origin:100% 0;">12,478</div>
<div class="t" style="top:917.82px;font-size:17.50px;color:#ffffff;font-weight:bold;left:2762.47px;transform:scaleX(1.0400);transform-origin:100% 0;">13,305</div>
<div class="s" style="top:1034.00px;font-size:16.00px;color:#141414;left:867.30px;">(4,289)</div>
<div class="s" style="top:1034.00px;font-size:16.00px;color:#141414;left:986.30px;">(4,289)</div>
<div class="s" style="top:1034.00px;font-size:16.00px;color:#141414;left:1105.30px;">(4,955)</div>
<div class="s" style="top:1034.00px;font-size:16.00px;color:#141414;left:1224.30px;">(4,944)</div>
<div class="s" style="top:1034.00px;font-size:16.00px;color:#141414;left:1343.30px;">(4,933)</div>
<div class="s" style="top:1034.00px;font-size:16.00px;color:#141414;left:1462.30px;">(4,922)</div>
<div class="s" style="top:1034.00px;font-size:16.00px;color:#141414;left:1582.49px;">(4,911)</div>
<div class="s" style="top:1034.00px;font-size:16.00px;color:#141414;left:1700.30px;">(4,900)</div>
<div class="s" style="top:1034.00px;font-size:16.00px;color:#141414;left:1819.30px;">(4,889)</div>
<div class="s" style="top:1034.00px;font-size:16.00px;color:#141414;left:1938.30px;">(4,877)</div>
<div class="s" style="top:1034.00px;font-size:16.00px;color:#141414;left:2057.30px;">(4,866)</div>
<div class="s" style="top:1034.00px;font-size:16.00px;color:#141414;left:2176.30px;">(4,855)</div>
<div class="s" style="top:1034.00px;font-size:16.00px;color:#141414;left:2291.46px;">16,641</div>
<div class="s" style="top:1034.00px;font-size:16.00px;color:#141414;left:2410.46px;">16,657</div>
<div class="s" style="top:1034.00px;font-size:16.00px;color:#141414;left:2529.46px;">16,673</div>
<div class="s" style="top:1034.00px;font-size:16.00px;color:#141414;left:2648.46px;">16,690</div>
<div class="s" style="top:1034.00px;font-size:16.00px;color:#141414;left:2767.46px;">16,706</div>
<div class="s" style="top:1053.50px;font-size:16.00px;color:#141414;left:872.36px;">1,165</div>
<div class="s" style="top:1053.50px;font-size:16.00px;color:#141414;left:1004.70px;">125</div>
<div class="s" style="top:1053.50px;font-size:16.00px;color:#141414;left:1118.65px;">(125)</div>
<div class="s" style="top:1053.50px;font-size:16.00px;color:#141414;left:1251.60px;">39</div>
<div class="s" style="top:1053.50px;font-size:16.00px;color:#141414;left:1365.55px;">(39)</div>
<div class="s" style="top:1053.50px;font-size:16.00px;color:#141414;left:1489.60px;">39</div>
<div class="s" style="top:1053.50px;font-size:16.00px;color:#141414;left:1603.55px;">(39)</div>
<div class="a" style="left:1741.20px;top:1062.00px;width:4.20px;height:1.00px;background:#2a2a2a;"></div>
<div class="s" style="top:1053.50px;font-size:16.00px;color:#141414;left:1846.60px;">39</div>
<div class="s" style="top:1053.50px;font-size:16.00px;color:#141414;left:1960.55px;">(39)</div>
<div class="s" style="top:1053.50px;font-size:16.00px;color:#141414;left:2084.60px;">39</div>
<div class="s" style="top:1053.50px;font-size:16.00px;color:#141414;left:2198.55px;">(39)</div>
<div class="s" style="top:1053.50px;font-size:16.00px;color:#141414;left:2286.41px;">(13,491)</div>
<div class="s" style="top:1053.50px;font-size:16.00px;color:#141414;left:2414.30px;">(1,321)</div>
<div class="s" style="top:1053.50px;font-size:16.00px;color:#141414;left:2538.36px;">1,321</div>
<div class="s" style="top:1053.50px;font-size:16.00px;color:#141414;left:2666.84px;">(411)</div>
<div class="s" style="top:1053.50px;font-size:16.00px;color:#141414;left:2790.89px;">411</div>
<div class="t" style="top:1071.52px;font-size:17.50px;color:#ffffff;font-weight:bold;left:863.05px;transform:scaleX(1.0400);transform-origin:100% 0;">(3,124)</div>
<div class="t" style="top:1071.52px;font-size:17.50px;color:#ffffff;font-weight:bold;left:982.05px;transform:scaleX(1.0400);transform-origin:100% 0;">(4,164)</div>
<div class="t" style="top:1071.52px;font-size:17.50px;color:#ffffff;font-weight:bold;left:1101.05px;transform:scaleX(1.0400);transform-origin:100% 0;">(5,080)</div>
<div class="t" style="top:1071.52px;font-size:17.50px;color:#ffffff;font-weight:bold;left:1220.05px;transform:scaleX(1.0400);transform-origin:100% 0;">(4,905)</div>
<div class="t" style="top:1071.52px;font-size:17.50px;color:#ffffff;font-weight:bold;left:1339.05px;transform:scaleX(1.0400);transform-origin:100% 0;">(4,972)</div>
<div class="t" style="top:1071.52px;font-size:17.50px;color:#ffffff;font-weight:bold;left:1458.05px;transform:scaleX(1.0400);transform-origin:100% 0;">(4,883)</div>
<div class="t" style="top:1071.52px;font-size:17.50px;color:#ffffff;font-weight:bold;left:1577.05px;transform:scaleX(1.0400);transform-origin:100% 0;">(4,950)</div>
<div class="t" style="top:1071.52px;font-size:17.50px;color:#ffffff;font-weight:bold;left:1696.05px;transform:scaleX(1.0400);transform-origin:100% 0;">(4,900)</div>
<div class="t" style="top:1071.52px;font-size:17.50px;color:#ffffff;font-weight:bold;left:1815.05px;transform:scaleX(1.0400);transform-origin:100% 0;">(4,850)</div>
<div class="t" style="top:1071.52px;font-size:17.50px;color:#ffffff;font-weight:bold;left:1934.05px;transform:scaleX(1.0400);transform-origin:100% 0;">(4,916)</div>
<div class="t" style="top:1071.52px;font-size:17.50px;color:#ffffff;font-weight:bold;left:2053.05px;transform:scaleX(1.0400);transform-origin:100% 0;">(4,827)</div>
<div class="t" style="top:1071.52px;font-size:17.50px;color:#ffffff;font-weight:bold;left:2172.05px;transform:scaleX(1.0400);transform-origin:100% 0;">(4,894)</div>
<div class="t" style="top:1071.52px;font-size:17.50px;color:#ffffff;font-weight:bold;left:2296.21px;transform:scaleX(1.0400);transform-origin:100% 0;">3,150</div>
<div class="t" style="top:1071.52px;font-size:17.50px;color:#ffffff;font-weight:bold;left:2405.47px;transform:scaleX(1.0400);transform-origin:100% 0;">15,337</div>
<div class="t" style="top:1071.52px;font-size:17.50px;color:#ffffff;font-weight:bold;left:2524.47px;transform:scaleX(1.0400);transform-origin:100% 0;">17,994</div>
<div class="t" style="top:1071.52px;font-size:17.50px;color:#ffffff;font-weight:bold;left:2643.47px;transform:scaleX(1.0400);transform-origin:100% 0;">16,279</div>
<div class="t" style="top:1071.52px;font-size:17.50px;color:#ffffff;font-weight:bold;left:2763.44px;transform:scaleX(1.0400);transform-origin:100% 0;">17,117</div>
<div class="s" style="top:1138.00px;font-size:16.00px;color:#141414;left:858.41px;">(14,333)</div>
<div class="s" style="top:1138.00px;font-size:16.00px;color:#141414;left:977.41px;">(20,333)</div>
<div class="s" style="top:1138.00px;font-size:16.00px;color:#141414;left:1096.41px;">(17,833)</div>
<div class="s" style="top:1138.00px;font-size:16.00px;color:#141414;left:1224.30px;">(9,000)</div>
<div class="s" style="top:1138.00px;font-size:16.00px;color:#141414;left:1343.30px;">(3,500)</div>
<div class="a" style="left:1503.20px;top:1146.00px;width:4.20px;height:1.00px;background:#2a2a2a;"></div>
<div class="a" style="left:1622.20px;top:1146.00px;width:4.20px;height:1.00px;background:#2a2a2a;"></div>
<div class="a" style="left:1741.20px;top:1146.00px;width:4.20px;height:1.00px;background:#2a2a2a;"></div>
<div class="a" style="left:1860.20px;top:1146.00px;width:4.20px;height:1.00px;background:#2a2a2a;"></div>
<div class="a" style="left:1979.20px;top:1146.00px;width:4.20px;height:1.00px;background:#2a2a2a;"></div>
<div class="a" style="left:2098.20px;top:1146.00px;width:4.20px;height:1.00px;background:#2a2a2a;"></div>
<div class="a" style="left:2217.20px;top:1146.00px;width:4.20px;height:1.00px;background:#2a2a2a;"></div>
<div class="a" style="left:2336.20px;top:1146.00px;width:4.20px;height:1.00px;background:#2a2a2a;"></div>
<div class="a" style="left:2455.20px;top:1146.00px;width:4.20px;height:1.00px;background:#2a2a2a;"></div>
<div class="a" style="left:2574.20px;top:1146.00px;width:4.20px;height:1.00px;background:#2a2a2a;"></div>
<div class="a" style="left:2693.20px;top:1146.00px;width:4.20px;height:1.00px;background:#2a2a2a;"></div>
<div class="a" style="left:2812.20px;top:1146.00px;width:4.20px;height:1.00px;background:#2a2a2a;"></div>
<div class="t" style="top:1155.92px;font-size:17.50px;color:#ffffff;font-weight:bold;left:853.32px;transform:scaleX(1.0400);transform-origin:100% 0;">(14,333)</div>
<div class="t" style="top:1155.92px;font-size:17.50px;color:#ffffff;font-weight:bold;left:972.32px;transform:scaleX(1.0400);transform-origin:100% 0;">(20,333)</div>
<div class="t" style="top:1155.92px;font-size:17.50px;color:#ffffff;font-weight:bold;left:1091.32px;transform:scaleX(1.0400);transform-origin:100% 0;">(17,833)</div>
<div class="t" style="top:1155.92px;font-size:17.50px;color:#ffffff;font-weight:bold;left:1220.05px;transform:scaleX(1.0400);transform-origin:100% 0;">(9,000)</div>
<div class="t" style="top:1155.92px;font-size:17.50px;color:#ffffff;font-weight:bold;left:1339.05px;transform:scaleX(1.0400);transform-origin:100% 0;">(3,500)</div>
<div class="a" style="left:1500.00px;top:1165.90px;width:7.00px;height:1.60px;background:#ffffff;"></div>
<div class="a" style="left:1619.00px;top:1165.90px;width:7.00px;height:1.60px;background:#ffffff;"></div>
<div class="a" style="left:1738.00px;top:1165.90px;width:7.00px;height:1.60px;background:#ffffff;"></div>
<div class="a" style="left:1857.00px;top:1165.90px;width:7.00px;height:1.60px;background:#ffffff;"></div>
<div class="a" style="left:1976.00px;top:1165.90px;width:7.00px;height:1.60px;background:#ffffff;"></div>
<div class="a" style="left:2095.00px;top:1165.90px;width:7.00px;height:1.60px;background:#ffffff;"></div>
<div class="a" style="left:2214.00px;top:1165.90px;width:7.00px;height:1.60px;background:#ffffff;"></div>
<div class="a" style="left:2333.00px;top:1165.90px;width:7.00px;height:1.60px;background:#ffffff;"></div>
<div class="a" style="left:2452.00px;top:1165.90px;width:7.00px;height:1.60px;background:#ffffff;"></div>
<div class="a" style="left:2571.00px;top:1165.90px;width:7.00px;height:1.60px;background:#ffffff;"></div>
<div class="a" style="left:2690.00px;top:1165.90px;width:7.00px;height:1.60px;background:#ffffff;"></div>
<div class="a" style="left:2809.00px;top:1165.90px;width:7.00px;height:1.60px;background:#ffffff;"></div>
<div class="s" style="top:1222.60px;font-size:16.00px;color:#141414;left:854.56px;">700,000</div>
<div class="a" style="left:1027.20px;top:1231.00px;width:4.20px;height:1.00px;background:#2a2a2a;"></div>
<div class="a" style="left:1146.20px;top:1231.00px;width:4.20px;height:1.00px;background:#2a2a2a;"></div>
<div class="a" style="left:1265.20px;top:1231.00px;width:4.20px;height:1.00px;background:#2a2a2a;"></div>
<div class="a" style="left:1384.20px;top:1231.00px;width:4.20px;height:1.00px;background:#2a2a2a;"></div>
<div class="a" style="left:1503.20px;top:1231.00px;width:4.20px;height:1.00px;background:#2a2a2a;"></div>
<div class="a" style="left:1622.20px;top:1231.00px;width:4.20px;height:1.00px;background:#2a2a2a;"></div>
<div class="a" style="left:1741.20px;top:1231.00px;width:4.20px;height:1.00px;background:#2a2a2a;"></div>
<div class="a" style="left:1860.20px;top:1231.00px;width:4.20px;height:1.00px;background:#2a2a2a;"></div>
<div class="a" style="left:1979.20px;top:1231.00px;width:4.20px;height:1.00px;background:#2a2a2a;"></div>
<div class="a" style="left:2098.20px;top:1231.00px;width:4.20px;height:1.00px;background:#2a2a2a;"></div>
<div class="a" style="left:2217.20px;top:1231.00px;width:4.20px;height:1.00px;background:#2a2a2a;"></div>
<div class="a" style="left:2336.20px;top:1231.00px;width:4.20px;height:1.00px;background:#2a2a2a;"></div>
<div class="a" style="left:2455.20px;top:1231.00px;width:4.20px;height:1.00px;background:#2a2a2a;"></div>
<div class="a" style="left:2574.20px;top:1231.00px;width:4.20px;height:1.00px;background:#2a2a2a;"></div>
<div class="a" style="left:2693.20px;top:1231.00px;width:4.20px;height:1.00px;background:#2a2a2a;"></div>
<div class="a" style="left:2812.20px;top:1231.00px;width:4.20px;height:1.00px;background:#2a2a2a;"></div>
<div class="s" style="top:1241.30px;font-size:16.00px;color:#141414;left:854.56px;">200,000</div>
<div class="a" style="left:1027.20px;top:1250.00px;width:4.20px;height:1.00px;background:#2a2a2a;"></div>
<div class="s" style="top:1241.30px;font-size:16.00px;color:#141414;left:1101.46px;">98,333</div>
<div class="s" style="top:1241.30px;font-size:16.00px;color:#141414;left:1224.30px;">(1,667)</div>
<div class="s" style="top:1241.30px;font-size:16.00px;color:#141414;left:1343.30px;">(1,667)</div>
<div class="s" style="top:1241.30px;font-size:16.00px;color:#141414;left:1462.30px;">(1,667)</div>
<div class="s" style="top:1241.30px;font-size:16.00px;color:#141414;left:1581.30px;">(1,667)</div>
<div class="s" style="top:1241.30px;font-size:16.00px;color:#141414;left:1700.30px;">(1,667)</div>
<div class="s" style="top:1241.30px;font-size:16.00px;color:#141414;left:1819.30px;">(1,667)</div>
<div class="s" style="top:1241.30px;font-size:16.00px;color:#141414;left:1938.30px;">(1,667)</div>
<div class="s" style="top:1241.30px;font-size:16.00px;color:#141414;left:2057.30px;">(1,667)</div>
<div class="s" style="top:1241.30px;font-size:16.00px;color:#141414;left:2176.30px;">(1,667)</div>
<div class="s" style="top:1241.30px;font-size:16.00px;color:#141414;left:2295.30px;">(3,770)</div>
<div class="s" style="top:1241.30px;font-size:16.00px;color:#141414;left:2414.30px;">(3,780)</div>
<div class="s" style="top:1241.30px;font-size:16.00px;color:#141414;left:2533.30px;">(3,791)</div>
<div class="s" style="top:1241.30px;font-size:16.00px;color:#141414;left:2652.30px;">(3,801)</div>
<div class="s" style="top:1241.30px;font-size:16.00px;color:#141414;left:2771.30px;">(3,812)</div>
<div class="a" style="left:908.20px;top:1268.00px;width:4.20px;height:1.00px;background:#2a2a2a;"></div>
<div class="a" style="left:1027.20px;top:1268.00px;width:4.20px;height:1.00px;background:#2a2a2a;"></div>
<div class="a" style="left:1146.20px;top:1268.00px;width:4.20px;height:1.00px;background:#2a2a2a;"></div>
<div class="a" style="left:1265.20px;top:1268.00px;width:4.20px;height:1.00px;background:#2a2a2a;"></div>
<div class="a" style="left:1384.20px;top:1268.00px;width:4.20px;height:1.00px;background:#2a2a2a;"></div>
<div class="a" style="left:1503.20px;top:1268.00px;width:4.20px;height:1.00px;background:#2a2a2a;"></div>
<div class="a" style="left:1622.20px;top:1268.00px;width:4.20px;height:1.00px;background:#2a2a2a;"></div>
<div class="a" style="left:1741.20px;top:1268.00px;width:4.20px;height:1.00px;background:#2a2a2a;"></div>
<div class="a" style="left:1860.20px;top:1268.00px;width:4.20px;height:1.00px;background:#2a2a2a;"></div>
<div class="a" style="left:1979.20px;top:1268.00px;width:4.20px;height:1.00px;background:#2a2a2a;"></div>
<div class="a" style="left:2098.20px;top:1268.00px;width:4.20px;height:1.00px;background:#2a2a2a;"></div>
<div class="a" style="left:2217.20px;top:1268.00px;width:4.20px;height:1.00px;background:#2a2a2a;"></div>
<div class="a" style="left:2336.20px;top:1268.00px;width:4.20px;height:1.00px;background:#2a2a2a;"></div>
<div class="a" style="left:2455.20px;top:1268.00px;width:4.20px;height:1.00px;background:#2a2a2a;"></div>
<div class="a" style="left:2574.20px;top:1268.00px;width:4.20px;height:1.00px;background:#2a2a2a;"></div>
<div class="a" style="left:2693.20px;top:1268.00px;width:4.20px;height:1.00px;background:#2a2a2a;"></div>
<div class="a" style="left:2812.20px;top:1268.00px;width:4.20px;height:1.00px;background:#2a2a2a;"></div>
<div class="t" style="top:1279.72px;font-size:17.50px;color:#ffffff;font-weight:bold;left:848.74px;transform:scaleX(1.0400);transform-origin:100% 0;">900,000</div>
<div class="a" style="left:1024.00px;top:1288.90px;width:7.00px;height:1.60px;background:#ffffff;"></div>
<div class="t" style="top:1279.72px;font-size:17.50px;color:#ffffff;font-weight:bold;left:1096.47px;transform:scaleX(1.0400);transform-origin:100% 0;">98,333</div>
<div class="t" style="top:1279.72px;font-size:17.50px;color:#ffffff;font-weight:bold;left:1220.05px;transform:scaleX(1.0400);transform-origin:100% 0;">(1,667)</div>
<div class="t" style="top:1279.72px;font-size:17.50px;color:#ffffff;font-weight:bold;left:1339.05px;transform:scaleX(1.0400);transform-origin:100% 0;">(1,667)</div>
<div class="t" style="top:1279.72px;font-size:17.50px;color:#ffffff;font-weight:bold;left:1458.05px;transform:scaleX(1.0400);transform-origin:100% 0;">(1,667)</div>
<div class="t" style="top:1279.72px;font-size:17.50px;color:#ffffff;font-weight:bold;left:1577.05px;transform:scaleX(1.0400);transform-origin:100% 0;">(1,667)</div>
<div class="t" style="top:1279.72px;font-size:17.50px;color:#ffffff;font-weight:bold;left:1696.05px;transform:scaleX(1.0400);transform-origin:100% 0;">(1,667)</div>
<div class="t" style="top:1279.72px;font-size:17.50px;color:#ffffff;font-weight:bold;left:1815.05px;transform:scaleX(1.0400);transform-origin:100% 0;">(1,667)</div>
<div class="t" style="top:1279.72px;font-size:17.50px;color:#ffffff;font-weight:bold;left:1934.05px;transform:scaleX(1.0400);transform-origin:100% 0;">(1,667)</div>
<div class="t" style="top:1279.72px;font-size:17.50px;color:#ffffff;font-weight:bold;left:2053.05px;transform:scaleX(1.0400);transform-origin:100% 0;">(1,667)</div>
<div class="t" style="top:1279.72px;font-size:17.50px;color:#ffffff;font-weight:bold;left:2172.05px;transform:scaleX(1.0400);transform-origin:100% 0;">(1,667)</div>
<div class="t" style="top:1279.72px;font-size:17.50px;color:#ffffff;font-weight:bold;left:2291.05px;transform:scaleX(1.0400);transform-origin:100% 0;">(3,770)</div>
<div class="t" style="top:1279.72px;font-size:17.50px;color:#ffffff;font-weight:bold;left:2410.05px;transform:scaleX(1.0400);transform-origin:100% 0;">(3,780)</div>
<div class="t" style="top:1279.72px;font-size:17.50px;color:#ffffff;font-weight:bold;left:2529.05px;transform:scaleX(1.0400);transform-origin:100% 0;">(3,791)</div>
<div class="t" style="top:1279.72px;font-size:17.50px;color:#ffffff;font-weight:bold;left:2648.05px;transform:scaleX(1.0400);transform-origin:100% 0;">(3,801)</div>
<div class="t" style="top:1279.72px;font-size:17.50px;color:#ffffff;font-weight:bold;left:2767.05px;transform:scaleX(1.0400);transform-origin:100% 0;">(3,812)</div>
<div class="a" style="left:908.20px;top:1356.00px;width:4.20px;height:1.00px;background:#2a2a2a;"></div>
<div class="s" style="top:1348.20px;font-size:16.00px;color:#141414;left:973.56px;">882,543</div>
<div class="s" style="top:1348.20px;font-size:16.00px;color:#141414;left:1092.56px;">858,046</div>
<div class="s" style="top:1348.20px;font-size:16.00px;color:#141414;left:1211.56px;">933,466</div>
<div class="s" style="top:1348.20px;font-size:16.00px;color:#141414;left:1330.56px;">917,894</div>
<div class="s" style="top:1348.20px;font-size:16.00px;color:#141414;left:1449.56px;">907,756</div>
<div class="s" style="top:1348.20px;font-size:16.00px;color:#141414;left:1568.56px;">901,206</div>
<div class="s" style="top:1348.20px;font-size:16.00px;color:#141414;left:1687.56px;">894,590</div>
<div class="s" style="top:1348.20px;font-size:16.00px;color:#141414;left:1806.56px;">888,023</div>
<div class="s" style="top:1348.20px;font-size:16.00px;color:#141414;left:1925.56px;">881,507</div>
<div class="s" style="top:1348.20px;font-size:16.00px;color:#141414;left:2044.56px;">874,924</div>
<div class="s" style="top:1348.20px;font-size:16.00px;color:#141414;left:2163.56px;">868,430</div>
<div class="s" style="top:1348.20px;font-size:16.00px;color:#141414;left:2282.56px;">861,869</div>
<div class="s" style="top:1348.20px;font-size:16.00px;color:#141414;left:2401.56px;">861,250</div>
<div class="s" style="top:1348.20px;font-size:16.00px;color:#141414;left:2520.56px;">872,806</div>
<div class="s" style="top:1348.20px;font-size:16.00px;color:#141414;left:2639.56px;">887,009</div>
<div class="s" style="top:1348.20px;font-size:16.00px;color:#141414;left:2758.56px;">899,487</div>
<div class="s" style="top:1370.60px;font-size:16.00px;color:#141414;left:854.56px;">882,543</div>
<div class="s" style="top:1370.60px;font-size:16.00px;color:#141414;left:977.41px;">(24,497)</div>
<div class="s" style="top:1370.60px;font-size:16.00px;color:#141414;left:1101.46px;">75,420</div>
<div class="s" style="top:1370.60px;font-size:16.00px;color:#141414;left:1215.41px;">(15,572)</div>
<div class="s" style="top:1370.60px;font-size:16.00px;color:#141414;left:1334.41px;">(10,138)</div>
<div class="s" style="top:1370.60px;font-size:16.00px;color:#141414;left:1462.30px;">(6,550)</div>
<div class="s" style="top:1370.60px;font-size:16.00px;color:#141414;left:1581.30px;">(6,616)</div>
<div class="s" style="top:1370.60px;font-size:16.00px;color:#141414;left:1700.30px;">(6,566)</div>
<div class="s" style="top:1370.60px;font-size:16.00px;color:#141414;left:1819.30px;">(6,516)</div>
<div class="s" style="top:1370.60px;font-size:16.00px;color:#141414;left:1938.30px;">(6,583)</div>
<div class="s" style="top:1370.60px;font-size:16.00px;color:#141414;left:2057.30px;">(6,494)</div>
<div class="s" style="top:1370.60px;font-size:16.00px;color:#141414;left:2176.30px;">(6,561)</div>
<div class="s" style="top:1370.60px;font-size:16.00px;color:#141414;left:2308.65px;">(620)</div>
<div class="s" style="top:1370.60px;font-size:16.00px;color:#141414;left:2411.65px;">11,557</div>
<div class="s" style="top:1370.60px;font-size:16.00px;color:#141414;left:2529.46px;">14,203</div>
<div class="s" style="top:1370.60px;font-size:16.00px;color:#141414;left:2648.46px;">12,478</div>
<div class="s" style="top:1370.60px;font-size:16.00px;color:#141414;left:2767.46px;">13,305</div>
<div class="t" style="top:1390.82px;font-size:17.50px;color:#ffffff;font-weight:bold;left:848.74px;transform:scaleX(1.0400);transform-origin:100% 0;">882,543</div>
<div class="t" style="top:1390.82px;font-size:17.50px;color:#ffffff;font-weight:bold;left:967.74px;transform:scaleX(1.0400);transform-origin:100% 0;">858,046</div>
<div class="t" style="top:1390.82px;font-size:17.50px;color:#ffffff;font-weight:bold;left:1086.74px;transform:scaleX(1.0400);transform-origin:100% 0;">933,466</div>
<div class="t" style="top:1390.82px;font-size:17.50px;color:#ffffff;font-weight:bold;left:1205.74px;transform:scaleX(1.0400);transform-origin:100% 0;">917,894</div>
<div class="t" style="top:1390.82px;font-size:17.50px;color:#ffffff;font-weight:bold;left:1324.74px;transform:scaleX(1.0400);transform-origin:100% 0;">907,756</div>
<div class="t" style="top:1390.82px;font-size:17.50px;color:#ffffff;font-weight:bold;left:1443.74px;transform:scaleX(1.0400);transform-origin:100% 0;">901,206</div>
<div class="t" style="top:1390.82px;font-size:17.50px;color:#ffffff;font-weight:bold;left:1562.74px;transform:scaleX(1.0400);transform-origin:100% 0;">894,590</div>
<div class="t" style="top:1390.82px;font-size:17.50px;color:#ffffff;font-weight:bold;left:1681.74px;transform:scaleX(1.0400);transform-origin:100% 0;">888,023</div>
<div class="t" style="top:1390.82px;font-size:17.50px;color:#ffffff;font-weight:bold;left:1800.74px;transform:scaleX(1.0400);transform-origin:100% 0;">881,507</div>
<div class="t" style="top:1390.82px;font-size:17.50px;color:#ffffff;font-weight:bold;left:1919.74px;transform:scaleX(1.0400);transform-origin:100% 0;">874,924</div>
<div class="t" style="top:1390.82px;font-size:17.50px;color:#ffffff;font-weight:bold;left:2038.74px;transform:scaleX(1.0400);transform-origin:100% 0;">868,430</div>
<div class="t" style="top:1390.82px;font-size:17.50px;color:#ffffff;font-weight:bold;left:2157.74px;transform:scaleX(1.0400);transform-origin:100% 0;">861,869</div>
<div class="t" style="top:1390.82px;font-size:17.50px;color:#ffffff;font-weight:bold;left:2276.74px;transform:scaleX(1.0400);transform-origin:100% 0;">861,250</div>
<div class="t" style="top:1390.82px;font-size:17.50px;color:#ffffff;font-weight:bold;left:2395.74px;transform:scaleX(1.0400);transform-origin:100% 0;">872,806</div>
<div class="t" style="top:1390.82px;font-size:17.50px;color:#ffffff;font-weight:bold;left:2514.74px;transform:scaleX(1.0400);transform-origin:100% 0;">887,009</div>
<div class="t" style="top:1390.82px;font-size:17.50px;color:#ffffff;font-weight:bold;left:2633.74px;transform:scaleX(1.0400);transform-origin:100% 0;">899,487</div>
<div class="t" style="top:1390.82px;font-size:17.50px;color:#ffffff;font-weight:bold;left:2752.74px;transform:scaleX(1.0400);transform-origin:100% 0;">912,792</div>
<div class="s" style="top:1489.62px;font-size:14.10px;color:#141414;left:867.08px;">(14,333)</div>
<div class="s" style="top:1489.62px;font-size:14.10px;color:#141414;left:986.08px;">(20,333)</div>
<div class="s" style="top:1489.62px;font-size:14.10px;color:#141414;left:1105.08px;">(17,833)</div>
<div class="s" style="top:1489.62px;font-size:14.10px;color:#141414;left:1231.92px;">(9,000)</div>
<div class="s" style="top:1489.62px;font-size:14.10px;color:#141414;left:1350.92px;">(3,500)</div>
<div class="a" style="left:1505.50px;top:1496.00px;width:4.20px;height:1.00px;background:#2a2a2a;"></div>
<div class="a" style="left:1624.50px;top:1496.00px;width:4.20px;height:1.00px;background:#2a2a2a;"></div>
<div class="a" style="left:1743.50px;top:1496.00px;width:4.20px;height:1.00px;background:#2a2a2a;"></div>
<div class="a" style="left:1862.50px;top:1496.00px;width:4.20px;height:1.00px;background:#2a2a2a;"></div>
<div class="a" style="left:1981.50px;top:1496.00px;width:4.20px;height:1.00px;background:#2a2a2a;"></div>
<div class="a" style="left:2100.50px;top:1496.00px;width:4.20px;height:1.00px;background:#2a2a2a;"></div>
<div class="a" style="left:2219.50px;top:1496.00px;width:4.20px;height:1.00px;background:#2a2a2a;"></div>
<div class="a" style="left:2338.50px;top:1496.00px;width:4.20px;height:1.00px;background:#2a2a2a;"></div>
<div class="a" style="left:2457.50px;top:1496.00px;width:4.20px;height:1.00px;background:#2a2a2a;"></div>
<div class="a" style="left:2576.50px;top:1496.00px;width:4.20px;height:1.00px;background:#2a2a2a;"></div>
<div class="a" style="left:2695.50px;top:1496.00px;width:4.20px;height:1.00px;background:#2a2a2a;"></div>
<div class="a" style="left:2814.50px;top:1496.00px;width:4.20px;height:1.00px;background:#2a2a2a;"></div>
<div class="s" style="top:1510.12px;font-size:14.10px;color:#141414;left:863.43px;">900,000</div>
<div class="a" style="left:1029.50px;top:1517.00px;width:4.20px;height:1.00px;background:#2a2a2a;"></div>
<div class="s" style="top:1510.12px;font-size:14.10px;color:#141414;left:1109.27px;">98,333</div>
<div class="s" style="top:1510.12px;font-size:14.10px;color:#141414;left:1231.92px;">(1,667)</div>
<div class="s" style="top:1510.12px;font-size:14.10px;color:#141414;left:1350.92px;">(1,667)</div>
<div class="s" style="top:1510.12px;font-size:14.10px;color:#141414;left:1469.92px;">(1,667)</div>
<div class="s" style="top:1510.12px;font-size:14.10px;color:#141414;left:1588.92px;">(1,667)</div>
<div class="s" style="top:1510.12px;font-size:14.10px;color:#141414;left:1707.92px;">(1,667)</div>
<div class="s" style="top:1510.12px;font-size:14.10px;color:#141414;left:1826.92px;">(1,667)</div>
<div class="s" style="top:1510.12px;font-size:14.10px;color:#141414;left:1945.92px;">(1,667)</div>
<div class="s" style="top:1510.12px;font-size:14.10px;color:#141414;left:2064.92px;">(1,667)</div>
<div class="s" style="top:1510.12px;font-size:14.10px;color:#141414;left:2183.92px;">(1,667)</div>
<div class="s" style="top:1510.12px;font-size:14.10px;color:#141414;left:2302.92px;">(3,770)</div>
<div class="s" style="top:1510.12px;font-size:14.10px;color:#141414;left:2421.92px;">(3,780)</div>
<div class="s" style="top:1510.12px;font-size:14.10px;color:#141414;left:2540.92px;">(3,791)</div>
<div class="s" style="top:1510.12px;font-size:14.10px;color:#141414;left:2659.92px;">(3,801)</div>
<div class="s" style="top:1510.12px;font-size:14.10px;color:#141414;left:2778.92px;">(3,812)</div>
<div class="s" style="top:1530.21px;font-size:14.10px;color:#141414;left:871.27px;">22,730</div>
<div class="s" style="top:1530.21px;font-size:14.10px;color:#141414;left:990.27px;">41,757</div>
<div class="s" style="top:1530.21px;font-size:14.10px;color:#141414;left:1109.27px;">46,323</div>
<div class="s" style="top:1530.21px;font-size:14.10px;color:#141414;left:1228.27px;">43,330</div>
<div class="s" style="top:1530.21px;font-size:14.10px;color:#141414;left:1347.27px;">44,750</div>
<div class="s" style="top:1530.21px;font-size:14.10px;color:#141414;left:1466.27px;">43,330</div>
<div class="s" style="top:1530.21px;font-size:14.10px;color:#141414;left:1585.27px;">44,750</div>
<div class="s" style="top:1530.21px;font-size:14.10px;color:#141414;left:1704.27px;">44,040</div>
<div class="s" style="top:1530.21px;font-size:14.10px;color:#141414;left:1823.27px;">43,330</div>
<div class="s" style="top:1530.21px;font-size:14.10px;color:#141414;left:1942.27px;">44,750</div>
<div class="s" style="top:1530.21px;font-size:14.10px;color:#141414;left:2061.27px;">43,330</div>
<div class="s" style="top:1530.21px;font-size:14.10px;color:#141414;left:2180.27px;">44,750</div>
<div class="s" style="top:1530.21px;font-size:14.10px;color:#141414;left:2299.27px;">70,620</div>
<div class="s" style="top:1530.21px;font-size:14.10px;color:#141414;left:2418.27px;">90,586</div>
<div class="s" style="top:1530.21px;font-size:14.10px;color:#141414;left:2529.43px;">100,492</div>
<div class="s" style="top:1530.21px;font-size:14.10px;color:#141414;left:2656.27px;">93,998</div>
<div class="s" style="top:1530.21px;font-size:14.10px;color:#141414;left:2775.27px;">97,080</div>
<div class="s" style="top:1550.41px;font-size:14.10px;color:#141414;left:867.08px;">(24,854)</div>
<div class="s" style="top:1550.41px;font-size:14.10px;color:#141414;left:986.08px;">(44,921)</div>
<div class="s" style="top:1550.41px;font-size:14.10px;color:#141414;left:1105.08px;">(49,737)</div>
<div class="s" style="top:1550.41px;font-size:14.10px;color:#141414;left:1224.08px;">(46,579)</div>
<div class="s" style="top:1550.41px;font-size:14.10px;color:#141414;left:1343.08px;">(48,078)</div>
<div class="s" style="top:1550.41px;font-size:14.10px;color:#141414;left:1462.08px;">(46,579)</div>
<div class="s" style="top:1550.41px;font-size:14.10px;color:#141414;left:1581.08px;">(48,078)</div>
<div class="s" style="top:1550.41px;font-size:14.10px;color:#141414;left:1700.08px;">(47,329)</div>
<div class="s" style="top:1550.41px;font-size:14.10px;color:#141414;left:1819.08px;">(46,579)</div>
<div class="s" style="top:1550.41px;font-size:14.10px;color:#141414;left:1938.08px;">(48,078)</div>
<div class="s" style="top:1550.41px;font-size:14.10px;color:#141414;left:2057.08px;">(46,579)</div>
<div class="s" style="top:1550.41px;font-size:14.10px;color:#141414;left:2176.08px;">(48,078)</div>
<div class="s" style="top:1550.41px;font-size:14.10px;color:#141414;left:2295.08px;">(60,548)</div>
<div class="s" style="top:1550.41px;font-size:14.10px;color:#141414;left:2414.08px;">(68,344)</div>
<div class="s" style="top:1550.41px;font-size:14.10px;color:#141414;left:2533.08px;">(75,609)</div>
<div class="s" style="top:1550.41px;font-size:14.10px;color:#141414;left:2652.08px;">(70,846)</div>
<div class="s" style="top:1550.41px;font-size:14.10px;color:#141414;left:2771.08px;">(73,106)</div>
<div class="s" style="top:1569.62px;font-size:14.10px;color:#141414;left:863.43px;">883,543</div>
<div class="s" style="top:1569.62px;font-size:14.10px;color:#141414;left:986.08px;">(23,497)</div>
<div class="s" style="top:1569.62px;font-size:14.10px;color:#141414;left:1109.27px;">77,087</div>
<div class="s" style="top:1569.62px;font-size:14.10px;color:#141414;left:1224.08px;">(13,916)</div>
<div class="s" style="top:1569.62px;font-size:14.10px;color:#141414;left:1350.92px;">(8,494)</div>
<div class="s" style="top:1569.62px;font-size:14.10px;color:#141414;left:1469.92px;">(4,916)</div>
<div class="s" style="top:1569.62px;font-size:14.10px;color:#141414;left:1588.92px;">(4,994)</div>
<div class="s" style="top:1569.62px;font-size:14.10px;color:#141414;left:1707.92px;">(4,955)</div>
<div class="s" style="top:1569.62px;font-size:14.10px;color:#141414;left:1826.92px;">(4,916)</div>
<div class="s" style="top:1569.62px;font-size:14.10px;color:#141414;left:1945.92px;">(4,994)</div>
<div class="s" style="top:1569.62px;font-size:14.10px;color:#141414;left:2064.92px;">(4,916)</div>
<div class="s" style="top:1569.62px;font-size:14.10px;color:#141414;left:2183.92px;">(4,994)</div>
<div class="s" style="top:1569.62px;font-size:14.10px;color:#141414;left:2307.12px;">6,302</div>
<div class="s" style="top:1569.62px;font-size:14.10px;color:#141414;left:2418.27px;">18,462</div>
<div class="s" style="top:1569.62px;font-size:14.10px;color:#141414;left:2537.27px;">21,093</div>
<div class="s" style="top:1569.62px;font-size:14.10px;color:#141414;left:2656.27px;">19,351</div>
<div class="s" style="top:1569.62px;font-size:14.10px;color:#141414;left:2775.27px;">20,162</div>
<div class="s" style="top:1590.12px;font-size:14.10px;color:#141414;left:874.92px;">(1,000)</div>
<div class="s" style="top:1590.12px;font-size:14.10px;color:#141414;left:993.92px;">(1,000)</div>
<div class="s" style="top:1590.12px;font-size:14.10px;color:#141414;left:1112.92px;">(1,667)</div>
<div class="s" style="top:1590.12px;font-size:14.10px;color:#141414;left:1231.92px;">(1,656)</div>
<div class="s" style="top:1590.12px;font-size:14.10px;color:#141414;left:1350.92px;">(1,644)</div>
<div class="s" style="top:1590.12px;font-size:14.10px;color:#141414;left:1469.92px;">(1,633)</div>
<div class="s" style="top:1590.12px;font-size:14.10px;color:#141414;left:1588.92px;">(1,622)</div>
<div class="s" style="top:1590.12px;font-size:14.10px;color:#141414;left:1708.97px;">(1,611)</div>
<div class="s" style="top:1590.12px;font-size:14.10px;color:#141414;left:1826.92px;">(1,600)</div>
<div class="s" style="top:1590.12px;font-size:14.10px;color:#141414;left:1945.92px;">(1,589)</div>
<div class="s" style="top:1590.12px;font-size:14.10px;color:#141414;left:2064.92px;">(1,578)</div>
<div class="s" style="top:1590.12px;font-size:14.10px;color:#141414;left:2183.92px;">(1,567)</div>
<div class="s" style="top:1590.12px;font-size:14.10px;color:#141414;left:2302.92px;">(1,556)</div>
<div class="s" style="top:1590.12px;font-size:14.10px;color:#141414;left:2421.92px;">(1,534)</div>
<div class="s" style="top:1590.12px;font-size:14.10px;color:#141414;left:2540.92px;">(1,512)</div>
<div class="s" style="top:1590.12px;font-size:14.10px;color:#141414;left:2659.92px;">(1,491)</div>
<div class="s" style="top:1590.12px;font-size:14.10px;color:#141414;left:2778.92px;">(1,469)</div>
<div class="a" style="left:910.50px;top:1617.00px;width:4.20px;height:1.00px;background:#2a2a2a;"></div>
<div class="a" style="left:1029.50px;top:1617.00px;width:4.20px;height:1.00px;background:#2a2a2a;"></div>
<div class="a" style="left:1148.50px;top:1617.00px;width:4.20px;height:1.00px;background:#2a2a2a;"></div>
<div class="a" style="left:1267.50px;top:1617.00px;width:4.20px;height:1.00px;background:#2a2a2a;"></div>
<div class="a" style="left:1386.50px;top:1617.00px;width:4.20px;height:1.00px;background:#2a2a2a;"></div>
<div class="a" style="left:1505.50px;top:1617.00px;width:4.20px;height:1.00px;background:#2a2a2a;"></div>
<div class="a" style="left:1624.50px;top:1617.00px;width:4.20px;height:1.00px;background:#2a2a2a;"></div>
<div class="a" style="left:1743.50px;top:1617.00px;width:4.20px;height:1.00px;background:#2a2a2a;"></div>
<div class="a" style="left:1862.50px;top:1617.00px;width:4.20px;height:1.00px;background:#2a2a2a;"></div>
<div class="a" style="left:1981.50px;top:1617.00px;width:4.20px;height:1.00px;background:#2a2a2a;"></div>
<div class="a" style="left:2100.50px;top:1617.00px;width:4.20px;height:1.00px;background:#2a2a2a;"></div>
<div class="a" style="left:2219.50px;top:1617.00px;width:4.20px;height:1.00px;background:#2a2a2a;"></div>
<div class="s" style="top:1610.12px;font-size:14.10px;color:#141414;left:2302.92px;">(5,366)</div>
<div class="s" style="top:1610.12px;font-size:14.10px;color:#141414;left:2421.92px;">(5,372)</div>
<div class="s" style="top:1610.12px;font-size:14.10px;color:#141414;left:2540.92px;">(5,377)</div>
<div class="s" style="top:1610.12px;font-size:14.10px;color:#141414;left:2659.92px;">(5,383)</div>
<div class="s" style="top:1610.12px;font-size:14.10px;color:#141414;left:2778.92px;">(5,388)</div>
<div class="t" style="top:1628.62px;font-size:17.50px;color:#ffffff;font-weight:bold;left:848.74px;transform:scaleX(1.0400);transform-origin:100% 0;">882,543</div>
<div class="t" style="top:1628.62px;font-size:17.50px;color:#ffffff;font-weight:bold;left:972.32px;transform:scaleX(1.0400);transform-origin:100% 0;">(24,497)</div>
<div class="t" style="top:1628.62px;font-size:17.50px;color:#ffffff;font-weight:bold;left:1096.47px;transform:scaleX(1.0400);transform-origin:100% 0;">75,420</div>
<div class="t" style="top:1628.62px;font-size:17.50px;color:#ffffff;font-weight:bold;left:1210.32px;transform:scaleX(1.0400);transform-origin:100% 0;">(15,572)</div>
<div class="t" style="top:1628.62px;font-size:17.50px;color:#ffffff;font-weight:bold;left:1329.32px;transform:scaleX(1.0400);transform-origin:100% 0;">(10,138)</div>
<div class="t" style="top:1628.62px;font-size:17.50px;color:#ffffff;font-weight:bold;left:1458.05px;transform:scaleX(1.0400);transform-origin:100% 0;">(6,550)</div>
<div class="t" style="top:1628.62px;font-size:17.50px;color:#ffffff;font-weight:bold;left:1577.05px;transform:scaleX(1.0400);transform-origin:100% 0;">(6,616)</div>
<div class="t" style="top:1628.62px;font-size:17.50px;color:#ffffff;font-weight:bold;left:1696.05px;transform:scaleX(1.0400);transform-origin:100% 0;">(6,566)</div>
<div class="t" style="top:1628.62px;font-size:17.50px;color:#ffffff;font-weight:bold;left:1815.05px;transform:scaleX(1.0400);transform-origin:100% 0;">(6,516)</div>
<div class="t" style="top:1628.62px;font-size:17.50px;color:#ffffff;font-weight:bold;left:1934.05px;transform:scaleX(1.0400);transform-origin:100% 0;">(6,583)</div>
<div class="t" style="top:1628.62px;font-size:17.50px;color:#ffffff;font-weight:bold;left:2053.05px;transform:scaleX(1.0400);transform-origin:100% 0;">(6,494)</div>
<div class="t" style="top:1628.62px;font-size:17.50px;color:#ffffff;font-weight:bold;left:2172.05px;transform:scaleX(1.0400);transform-origin:100% 0;">(6,561)</div>
<div class="t" style="top:1628.62px;font-size:17.50px;color:#ffffff;font-weight:bold;left:2305.65px;transform:scaleX(1.0400);transform-origin:100% 0;">(620)</div>
<div class="t" style="top:1628.62px;font-size:17.50px;color:#ffffff;font-weight:bold;left:2406.44px;transform:scaleX(1.0400);transform-origin:100% 0;">11,557</div>
<div class="t" style="top:1628.62px;font-size:17.50px;color:#ffffff;font-weight:bold;left:2524.47px;transform:scaleX(1.0400);transform-origin:100% 0;">14,203</div>
<div class="t" style="top:1628.62px;font-size:17.50px;color:#ffffff;font-weight:bold;left:2643.47px;transform:scaleX(1.0400);transform-origin:100% 0;">12,478</div>
<div class="t" style="top:1628.62px;font-size:17.50px;color:#ffffff;font-weight:bold;left:2762.47px;transform:scaleX(1.0400);transform-origin:100% 0;">13,305</div>
<div class="a" style="left:785.00px;top:1400.90px;width:7.00px;height:1.60px;background:#ffffff;"></div>
<div class="a" style="left:13.80px;top:547.40px;width:17.70px;height:17.90px;background:#dedede;border:1px solid #f2f2f2;box-sizing:border-box;"></div>
<div class="a" style="left:18.50px;top:555.55px;width:8.30px;height:1.60px;background:#505050;"></div>
<div class="a" style="left:21.85px;top:552.20px;width:1.60px;height:8.30px;background:#505050;"></div>
<div class="a" style="left:13.80px;top:568.30px;width:17.70px;height:17.20px;background:#dedede;border:1px solid #f2f2f2;box-sizing:border-box;"></div>
<div class="a" style="left:18.50px;top:576.10px;width:8.30px;height:1.60px;background:#505050;"></div>
<div class="a" style="left:21.85px;top:572.75px;width:1.60px;height:8.30px;background:#505050;"></div>
<div class="a" style="left:2860.50px;top:278.00px;width:30.50px;height:1392.00px;background:#131313;"></div>
<div class="a" style="left:2864.00px;top:281.00px;width:24.00px;height:1387.00px;background:#1b1b1b;border-radius:12px;"></div>
<svg class="a" style="left:2868.00px;top:285.00px" width="16" height="12" viewBox="0 0 16 12"><path d="M8 1L15 11H1z" fill="#a0a0a0" stroke="#a0a0a0" stroke-linejoin="round" stroke-width="1.2"/></svg>
<div class="a" style="left:2870.00px;top:304.00px;width:12.00px;height:1023.00px;background:#9e9e9e;border-radius:6px;"></div>
<svg class="a" style="left:2868.00px;top:1653.00px" width="16" height="12" viewBox="0 0 16 12"><path d="M8 11L15 1H1z" fill="#a0a0a0" stroke="#a0a0a0" stroke-linejoin="round" stroke-width="1.2"/></svg>
<div class="a" style="left:11.00px;top:1670.00px;width:2880.00px;height:47.50px;background:#0b0b0b;"></div>
<div class="a" style="left:11.00px;top:1717.50px;width:2880.00px;height:33.50px;background:#151515;"></div>
<div class="a" style="left:11.00px;top:1717.50px;width:2880.00px;height:1.00px;background:#2b2b2b;"></div>
<svg class="a" style="left:44.00px;top:1684.00px" width="13" height="19" viewBox="0 0 13 19"><path d="M10.5 1.5L2.5 9.5l8 8" stroke="#9a9a9a" stroke-width="1.5" fill="none"/></svg>
<svg class="a" style="left:92.00px;top:1684.00px" width="13" height="19" viewBox="0 0 13 19"><path d="M2.5 1.5l8 8-8 8" stroke="#d0d0d0" stroke-width="1.5" fill="none"/></svg>
<div class="t" style="top:1685.35px;font-size:21.00px;color:#f2f2f2;left:190.00px;transform:scaleX(0.9839);transform-origin:0 0;">Contents</div>
<div class="a" style="left:291.50px;top:1680.00px;width:1.00px;height:28.00px;background:#6e6e6e;"></div>
<div class="a" style="left:433.00px;top:1680.00px;width:1.00px;height:28.00px;background:#6e6e6e;"></div>
<div class="a" style="left:552.00px;top:1680.00px;width:1.00px;height:28.00px;background:#6e6e6e;"></div>
<div class="a" style="left:722.95px;top:1680.00px;width:1.00px;height:28.00px;background:#6e6e6e;"></div>
<div class="a" style="left:825.10px;top:1680.00px;width:1.00px;height:28.00px;background:#6e6e6e;"></div>
<div class="a" style="left:925.10px;top:1680.00px;width:1.00px;height:28.00px;background:#6e6e6e;"></div>
<div class="a" style="left:1050.90px;top:1680.00px;width:1.00px;height:28.00px;background:#6e6e6e;"></div>
<div class="a" style="left:1154.00px;top:1680.00px;width:1.00px;height:28.00px;background:#6e6e6e;"></div>
<div class="a" style="left:1209.20px;top:1680.00px;width:1.00px;height:28.00px;background:#6e6e6e;"></div>
<div class="a" style="left:1269.95px;top:1680.00px;width:1.00px;height:28.00px;background:#6e6e6e;"></div>
<div class="a" style="left:1331.00px;top:1680.00px;width:1.00px;height:28.00px;background:#6e6e6e;"></div>
<div class="a" style="left:1458.90px;top:1680.00px;width:1.00px;height:28.00px;background:#6e6e6e;"></div>
<div class="a" style="left:1587.15px;top:1680.00px;width:1.00px;height:28.00px;background:#6e6e6e;"></div>
<div class="a" style="left:1714.00px;top:1680.00px;width:1.00px;height:28.00px;background:#6e6e6e;"></div>
<div class="a" style="left:1774.90px;top:1680.00px;width:1.00px;height:28.00px;background:#6e6e6e;"></div>
<div class="a" style="left:1859.90px;top:1680.00px;width:1.00px;height:28.00px;background:#6e6e6e;"></div>
<div class="a" style="left:1957.95px;top:1680.00px;width:1.00px;height:28.00px;background:#6e6e6e;"></div>
<div class="a" style="left:2034.95px;top:1680.00px;width:1.00px;height:28.00px;background:#6e6e6e;"></div>
<div class="a" style="left:298.70px;top:1675.80px;width:128.30px;height:36.20px;background:#fee968;border-radius:7px;"></div>
<div class="t" style="top:1685.35px;font-size:21.00px;color:#141414;left:311.48px;transform:scaleX(1.0126);transform-origin:50% 0;">Dashboard</div>
<div class="a" style="left:440.00px;top:1675.80px;width:106.00px;height:36.20px;background:#fee968;border-radius:7px;"></div>
<div class="t" style="top:1685.35px;font-size:21.00px;color:#141414;left:450.97px;transform:scaleX(0.9557);transform-origin:50% 0;">Revenue</div>
<div class="a" style="left:559.00px;top:1675.80px;width:158.00px;height:36.20px;background:#fee968;border-radius:7px;"></div>
<div class="t" style="top:1685.35px;font-size:21.00px;color:#141414;left:565.06px;transform:scaleX(0.9356);transform-origin:50% 0;">COGS &amp; OPEX</div>
<div class="a" style="left:729.90px;top:1675.80px;width:89.30px;height:36.20px;background:#fee968;border-radius:7px;"></div>
<div class="t" style="top:1685.35px;font-size:21.00px;color:#141414;left:742.45px;transform:scaleX(0.9740);transform-origin:50% 0;">Payroll</div>
<div class="a" style="left:832.00px;top:1675.80px;width:87.20px;height:36.20px;background:#fee968;border-radius:7px;"></div>
<div class="t" style="top:1685.35px;font-size:21.00px;color:#141414;left:840.00px;transform:scaleX(0.8854);transform-origin:50% 0;">CAPEX</div>
<div class="a" style="left:932.00px;top:1675.80px;width:112.80px;height:36.20px;background:#fee968;border-radius:7px;"></div>
<div class="t" style="top:1685.35px;font-size:21.00px;color:#141414;left:944.04px;transform:scaleX(0.9925);transform-origin:50% 0;">CapTable</div>
<div class="a" style="left:1058.00px;top:1675.80px;width:90.00px;height:36.20px;background:#fee968;border-radius:7px;"></div>
<div class="t" style="top:1685.35px;font-size:21.00px;color:#141414;left:1070.32px;">Capital</div>
<div class="a" style="left:1161.00px;top:1675.80px;width:42.00px;height:36.20px;background:#4ab3e8;border-radius:7px;"></div>
<div class="t" style="top:1685.35px;font-size:21.00px;color:#141414;left:1172.08px;transform:scaleX(0.8098);transform-origin:50% 0;">IS</div>
<div class="a" style="left:1216.40px;top:1668.00px;width:47.20px;height:44.00px;background:linear-gradient(#ffffff 0%,#f7fbff 40%,#d8eaf8 100%);border-radius:0 0 7px 7px;"></div>
<svg class="a" style="left:1208.40px;top:1670.00px" width="8" height="8" viewBox="0 0 8 8"><path d="M0 0H8V8A8 8 0 0 0 0 0z" fill="#ffffff"/></svg>
<svg class="a" style="left:1263.60px;top:1670.00px" width="8" height="8" viewBox="0 0 8 8"><path d="M8 0H0V8A8 8 0 0 1 8 0z" fill="#ffffff"/></svg>
<div class="t" style="top:1680.75px;font-size:21.00px;color:#111111;left:1226.00px;transform:scaleX(0.7716);transform-origin:50% 0;">CF</div>
<div class="a" style="left:1228.00px;top:1705.10px;width:24.00px;height:2.70px;background:#1e7d45;"></div>
<div class="a" style="left:1277.30px;top:1675.80px;width:47.70px;height:36.20px;background:#4ab3e8;border-radius:7px;"></div>
<div class="t" style="top:1685.35px;font-size:21.00px;color:#141414;left:1287.14px;transform:scaleX(0.8015);transform-origin:50% 0;">BS</div>
<div class="a" style="left:1338.00px;top:1675.80px;width:114.60px;height:36.20px;background:#4ab3e8;border-radius:7px;"></div>
<div class="t" style="top:1685.35px;font-size:21.00px;color:#141414;left:1348.61px;transform:scaleX(0.9662);transform-origin:50% 0;">Scenarios</div>
<div class="a" style="left:1466.20px;top:1675.80px;width:114.60px;height:36.20px;background:#4ab3e8;border-radius:7px;"></div>
<div class="t" style="top:1685.35px;font-size:21.00px;color:#141414;left:1480.49px;transform:scaleX(1.0419);transform-origin:50% 0;">Valuation</div>
<div class="a" style="left:1594.50px;top:1675.80px;width:113.50px;height:36.20px;background:#4ab3e8;border-radius:7px;"></div>
<div class="t" style="top:1685.35px;font-size:21.00px;color:#141414;left:1606.33px;">Summary</div>
<div class="a" style="left:1721.00px;top:1675.80px;width:47.80px;height:36.20px;background:#4ab3e8;border-radius:7px;"></div>
<div class="t" style="top:1685.35px;font-size:21.00px;color:#141414;left:1730.89px;transform:scaleX(0.7648);transform-origin:50% 0;">BE</div>
<div class="a" style="left:1782.00px;top:1675.80px;width:71.60px;height:36.20px;background:#4ab3e8;border-radius:7px;"></div>
<div class="t" style="top:1685.35px;font-size:21.00px;color:#141414;left:1791.55px;transform:scaleX(0.8907);transform-origin:50% 0;">ROIC</div>
<div class="a" style="left:1867.20px;top:1675.80px;width:84.40px;height:36.20px;background:#4ab3e8;border-radius:7px;"></div>
<div class="t" style="top:1685.35px;font-size:21.00px;color:#141414;left:1878.47px;transform:scaleX(0.9625);transform-origin:50% 0;">Charts</div>
<div class="a" style="left:1965.30px;top:1675.80px;width:63.60px;height:36.20px;background:#4ab3e8;border-radius:7px;"></div>
<div class="t" style="top:1685.35px;font-size:21.00px;color:#141414;left:1974.93px;transform:scaleX(0.8663);transform-origin:50% 0;">KPIs</div>
<div class="a" style="left:2042px;top:1675.8px;width:29.8px;height:36.2px;overflow:hidden;border-radius:7px 0 0 7px;background:#4ab3e8">
<div class="t" style="left:14.00px;top:8.75px;font-size:21.00px;color:#141414">Scenarios</div>
</div>
<div class="a" style="left:2087.00px;top:1690.00px;width:4.00px;height:4.00px;background:#e0e0e0;border-radius:2px;"></div>
<div class="a" style="left:2093.50px;top:1690.00px;width:4.00px;height:4.00px;background:#e0e0e0;border-radius:2px;"></div>
<div class="a" style="left:2100.00px;top:1690.00px;width:4.00px;height:4.00px;background:#e0e0e0;border-radius:2px;"></div>
<div class="a" style="left:2134.50px;top:1691.70px;width:17.50px;height:1.60px;background:#e6e6e6;"></div>
<div class="a" style="left:2142.45px;top:1683.80px;width:1.60px;height:17.50px;background:#e6e6e6;"></div>
<div class="a" style="left:2190.00px;top:1686.00px;width:3.00px;height:3.00px;background:#e0e0e0;border-radius:1.5px;"></div>
<div class="a" style="left:2190.00px;top:1692.00px;width:3.00px;height:3.00px;background:#e0e0e0;border-radius:1.5px;"></div>
<div class="a" style="left:2190.00px;top:1698.00px;width:3.00px;height:3.00px;background:#e0e0e0;border-radius:1.5px;"></div>
<div class="a" style="left:2215.70px;top:1680.50px;width:645.30px;height:25.50px;background:#1a1a1a;border-radius:13px;"></div>
<svg class="a" style="left:2222.00px;top:1686.00px" width="13" height="15" viewBox="0 0 13 15"><path d="M11.5 1.5V13.5L2 7.5z" fill="#a0a0a0" stroke="#a0a0a0" stroke-linejoin="round"/></svg>
<div class="a" style="left:2241.30px;top:1687.00px;width:159.60px;height:12.00px;background:#9e9e9e;border-radius:6px;"></div>
<svg class="a" style="left:2842.00px;top:1686.00px" width="13" height="15" viewBox="0 0 13 15"><path d="M1.5 1.5V13.5L11 7.5z" fill="#a0a0a0" stroke="#a0a0a0" stroke-linejoin="round"/></svg>
<div class="t" style="top:1727.65px;font-size:17.00px;color:#e8e8e8;left:27.60px;transform:scaleX(0.8425);transform-origin:0 0;">Ready</div>
<svg class="a" style="left:97.00px;top:1724.00px" width="26" height="23" viewBox="0 0 26 23"><path d="M3 17.5H1.5V2.5h21v9" stroke="#e8e8e8" stroke-width="1.8" fill="none"/><path d="M1.5 6h21" stroke="#e8e8e8" stroke-width="1.6"/><path d="M4.5 9.5h6M4.5 12.5h4M4.5 15.5h4" stroke="#e8e8e8" stroke-width="1.6"/><circle cx="16.5" cy="15.5" r="5.8" fill="#151515" stroke="#e8e8e8" stroke-width="1.8"/><circle cx="16.5" cy="15.5" r="2.4" fill="#e8e8e8"/></svg>
<svg class="a" style="left:145.00px;top:1723.00px" width="24" height="24" viewBox="0 0 24 24"><circle cx="10.5" cy="4" r="2.4" stroke="#f0f0f0" stroke-width="1.7" fill="none"/><path d="M2.5 6.5q3 3.5 8 3.5t8-3.5" stroke="#f0f0f0" stroke-width="1.8" fill="none" stroke-linecap="round"/><path d="M10.5 10v4.5L5.5 22" stroke="#f0f0f0" stroke-width="1.8" fill="none" stroke-linecap="round"/><path d="M13 14.5l8.5 8.5M21.5 14.5l-8.5 8.5" stroke="#f0f0f0" stroke-width="1.7"/></svg>
<div class="t" style="top:1727.65px;font-size:17.00px;color:#f0f0f0;font-weight:bold;left:173.70px;transform:scaleX(0.9191);transform-origin:0 0;">Accessibility: Investigate</div>
<div class="a" style="left:2445.00px;top:1718.50px;width:59.80px;height:32.10px;background:#262626;"></div>
<svg class="a" style="left:2463.00px;top:1723.00px" width="23" height="23" viewBox="0 0 23 23"><rect x="1" y="1" width="21" height="21" stroke="#ffffff" stroke-width="1.8" fill="none"/><path d="M8 1v21M15 1v21M1 8h21M1 15h21" stroke="#ffffff" stroke-width="1.6"/></svg>
<svg class="a" style="left:2523.00px;top:1723.00px" width="24" height="23" viewBox="0 0 24 23"><rect x="1" y="1" width="22" height="21" stroke="#ffffff" stroke-width="1.8" fill="none"/><rect x="5" y="4.5" width="14" height="14" stroke="#ffffff" stroke-width="1.5" fill="none"/><path d="M8 8.5h8M8 11.5h8M8 14.5h8" stroke="#ffffff" stroke-width="1.3"/></svg>
<svg class="a" style="left:2583.00px;top:1723.00px" width="24" height="23" viewBox="0 0 24 23"><rect x="1" y="1" width="22" height="21" stroke="#ffffff" stroke-width="1.8" fill="none"/><path d="M8 1v9h6V1" stroke="#ffffff" stroke-width="1.6" fill="none"/></svg>
<div class="a" style="left:2633.00px;top:1733.50px;width:11.50px;height:1.50px;background:#d8d8d8;"></div>
<div class="a" style="left:2653.00px;top:1734.00px;width:148.00px;height:1.50px;background:#bdbdbd;"></div>
<div class="a" style="left:2724.00px;top:1726.00px;width:7.00px;height:17.00px;background:#bdbdbd;"></div>
<div class="a" style="left:2809.00px;top:1733.50px;width:13.00px;height:1.50px;background:#d8d8d8;"></div>
<div class="a" style="left:2814.75px;top:1728.00px;width:1.50px;height:13.00px;background:#d8d8d8;"></div>
<div class="t" style="top:1727.65px;font-size:17.00px;color:#f0f0f0;left:2839.60px;transform:scaleX(0.9177);transform-origin:0 0;">100%</div>
</body></html>
